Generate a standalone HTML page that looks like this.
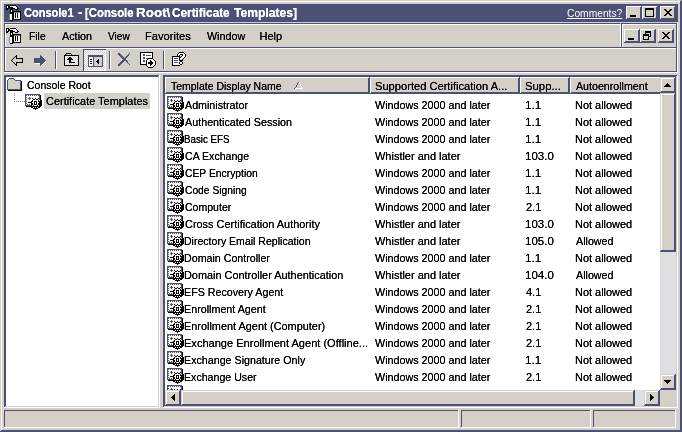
<!DOCTYPE html>
<html><head><meta charset="utf-8"><title>Console1</title>
<style>
*{box-sizing:border-box;margin:0;padding:0}
html,body{width:682px;height:432px;overflow:hidden;background:#d4d0c8;font-family:"Liberation Sans",sans-serif;font-size:11px;color:#000;text-shadow:0 0 0 #000}
.abs{position:absolute}
#win{position:absolute;left:0;top:0;width:682px;height:432px;background:#d4d0c8;will-change:transform;
 box-shadow:inset -1px -1px 0 #4b5076, inset 1px 1px 0 #d4d0c8, inset -2px -2px 0 #4b5076, inset 2px 2px 0 #fff}
#title{left:4px;top:4px;width:674px;height:18px;background:#4b5076}
#title .t{color:#fff;text-shadow:0 0 0 #fff;font-weight:bold;font-size:12px;line-height:14px;white-space:nowrap;letter-spacing:0}
#comments{left:566px;top:7px;color:#fff;text-shadow:0 0 0 #fff;font-size:11px;line-height:12px;text-decoration:underline}
.btn{background:#d4d0c8;box-shadow:inset -1px -1px 0 #4b5076, inset 1px 1px 0 #fff, inset -2px -2px 0 #4b5076}
.menu span{position:absolute;top:30px;font-size:11px;line-height:13px;white-space:nowrap}
.band{border-top:1px solid #4b5076;border-left:1px solid #4b5076;box-shadow:inset 1px 1px 0 #fff}
.row{position:absolute;left:0;height:17px;width:100%}
.row span{position:absolute;top:4px;line-height:13px;white-space:nowrap;font-size:11px}
.hdr{position:absolute;top:0;height:17px;background:#d4d0c8;box-shadow:inset -1px -1px 0 #4b5076, inset 1px 1px 0 #fff, inset -2px -2px 0 #4b5076}
.hdr span{position:absolute;left:6px;top:3px;line-height:13px;white-space:nowrap;font-size:11px}
.pane{background:#fff;box-shadow:inset -1px -1px 0 #fff, inset 1px 1px 0 #4b5076, inset -2px -2px 0 #d4d0c8, inset 2px 2px 0 #4b5076}
.tx{position:absolute;white-space:nowrap;font-size:11px;line-height:13px;transform-origin:0 0;display:block}
.sb{background:#dedfe3}
.sbtn{background:#d4d0c8;box-shadow:inset -1px -1px 0 #4b5076, inset 1px 1px 0 #d4d0c8, inset -2px -2px 0 #4b5076, inset 2px 2px 0 #fff}
.st{box-shadow:inset -1px -1px 0 #fff, inset 1px 1px 0 #4b5076}
.sep{width:2px;height:18px;border-left:1px solid #4b5076;border-right:1px solid #fff}
</style></head><body>
<div id="win">
<div id="title" class="abs"><span class="tx t" style="left:19.7px;top:2px;transform:scaleX(0.9185)">Console1</span><span class="tx t" style="left:74px;top:2px;transform:scaleX(1.075)">-</span><span class="tx t" style="left:80.6px;top:2px;transform:scaleX(0.946)">[Console</span><span class="tx t" style="left:132.1px;top:2px;transform:scaleX(1.1207)">Root\</span><span class="tx t" style="left:168px;top:2px;transform:scaleX(0.9828)">Certificate</span><span class="tx t" style="left:230px;top:2px;transform:scaleX(1.0097)">Templates]</span></div>
<svg class="abs" style="left:6px;top:5px" width="16" height="16" viewBox="0 0 16 16" shape-rendering="crispEdges" ><rect x="0" y="0" width="3" height="1" fill="#000"/><rect x="4" y="0" width="6" height="1" fill="#000"/><rect x="0" y="1" width="1" height="1" fill="#000"/><rect x="1" y="1" width="1" height="1" fill="#fff"/><rect x="2" y="1" width="2" height="1" fill="#000"/><rect x="4" y="1" width="6" height="1" fill="#fff"/><rect x="10" y="1" width="1" height="1" fill="#000"/><rect x="0" y="2" width="1" height="1" fill="#000"/><rect x="1" y="2" width="1" height="1" fill="#fff"/><rect x="2" y="2" width="5" height="1" fill="#000"/><rect x="7" y="2" width="4" height="1" fill="#fff"/><rect x="11" y="2" width="1" height="1" fill="#000"/><rect x="0" y="3" width="3" height="1" fill="#000"/><rect x="4" y="3" width="5" height="1" fill="#000"/><rect x="9" y="3" width="2" height="1" fill="#fff"/><rect x="11" y="3" width="2" height="1" fill="#000"/><rect x="0" y="4" width="2" height="1" fill="#000"/><rect x="4" y="4" width="3" height="1" fill="#000"/><rect x="9" y="4" width="3" height="1" fill="#000"/><rect x="4" y="5" width="1" height="1" fill="#000"/><rect x="5" y="5" width="1" height="1" fill="#fff"/><rect x="6" y="5" width="1" height="1" fill="#000"/><rect x="4" y="6" width="1" height="1" fill="#000"/><rect x="5" y="6" width="1" height="1" fill="#fff"/><rect x="6" y="6" width="9" height="1" fill="#000"/><rect x="4" y="7" width="4" height="1" fill="#000"/><rect x="8" y="7" width="6" height="1" fill="#7d81a0"/><rect x="14" y="7" width="1" height="1" fill="#000"/><rect x="4" y="8" width="4" height="1" fill="#000"/><rect x="8" y="8" width="1" height="1" fill="#fff"/><rect x="9" y="8" width="1" height="1" fill="#000"/><rect x="10" y="8" width="1" height="1" fill="#fff"/><rect x="11" y="8" width="1" height="1" fill="#000"/><rect x="12" y="8" width="2" height="1" fill="#fff"/><rect x="14" y="8" width="1" height="1" fill="#000"/><rect x="3" y="9" width="1" height="1" fill="#7d81a0"/><rect x="4" y="9" width="2" height="1" fill="#fff"/><rect x="6" y="9" width="2" height="1" fill="#000"/><rect x="8" y="9" width="1" height="1" fill="#fff"/><rect x="9" y="9" width="1" height="1" fill="#000"/><rect x="10" y="9" width="1" height="1" fill="#fff"/><rect x="11" y="9" width="1" height="1" fill="#000"/><rect x="12" y="9" width="2" height="1" fill="#fff"/><rect x="14" y="9" width="1" height="1" fill="#000"/><rect x="3" y="10" width="1" height="1" fill="#7d81a0"/><rect x="4" y="10" width="2" height="1" fill="#fff"/><rect x="6" y="10" width="2" height="1" fill="#000"/><rect x="8" y="10" width="1" height="1" fill="#fff"/><rect x="9" y="10" width="1" height="1" fill="#000"/><rect x="10" y="10" width="1" height="1" fill="#fff"/><rect x="11" y="10" width="1" height="1" fill="#000"/><rect x="12" y="10" width="2" height="1" fill="#fff"/><rect x="14" y="10" width="1" height="1" fill="#000"/><rect x="3" y="11" width="1" height="1" fill="#7d81a0"/><rect x="4" y="11" width="2" height="1" fill="#fff"/><rect x="6" y="11" width="2" height="1" fill="#000"/><rect x="8" y="11" width="1" height="1" fill="#fff"/><rect x="9" y="11" width="1" height="1" fill="#000"/><rect x="10" y="11" width="1" height="1" fill="#fff"/><rect x="11" y="11" width="1" height="1" fill="#000"/><rect x="12" y="11" width="2" height="1" fill="#fff"/><rect x="14" y="11" width="1" height="1" fill="#000"/><rect x="3" y="12" width="1" height="1" fill="#7d81a0"/><rect x="4" y="12" width="2" height="1" fill="#fff"/><rect x="6" y="12" width="2" height="1" fill="#000"/><rect x="8" y="12" width="1" height="1" fill="#fff"/><rect x="9" y="12" width="1" height="1" fill="#000"/><rect x="10" y="12" width="1" height="1" fill="#fff"/><rect x="11" y="12" width="1" height="1" fill="#000"/><rect x="12" y="12" width="2" height="1" fill="#fff"/><rect x="14" y="12" width="1" height="1" fill="#000"/><rect x="3" y="13" width="1" height="1" fill="#7d81a0"/><rect x="4" y="13" width="2" height="1" fill="#fff"/><rect x="6" y="13" width="2" height="1" fill="#000"/><rect x="8" y="13" width="6" height="1" fill="#fff"/><rect x="14" y="13" width="1" height="1" fill="#000"/><rect x="3" y="14" width="1" height="1" fill="#7d81a0"/><rect x="4" y="14" width="2" height="1" fill="#fff"/><rect x="6" y="14" width="9" height="1" fill="#000"/><rect x="4" y="15" width="3" height="1" fill="#000"/></svg>
<span class="tx" style="left:567px;top:7px;transform:scaleX(0.9322);color:#fff;text-shadow:none;text-decoration:underline">Comments?</span>
<div class="abs btn" style="left:626px;top:6px;width:16px;height:14px"><div class="abs" style="left:4px;top:9px;width:6px;height:2px;background:#000"></div></div>
<div class="abs btn" style="left:642px;top:6px;width:16px;height:14px"><div class="abs" style="left:3px;top:2px;width:9px;height:9px;border:1px solid #000;border-top-width:2px"></div></div>
<div class="abs btn" style="left:660px;top:6px;width:16px;height:14px"><svg class="abs" style="left:4px;top:3px" width="8" height="7" viewBox="0 0 8 7" shape-rendering="crispEdges"><path d="M0 0h2v1h1v1h2v-1h1v-1h2v1h-1v1h-1v1h-1v1h1v1h1v1h1v1h-2v-1h-1v-1h-2v1h-1v1h-2v-1h1v-1h1v-1h1v-1h-1v-1h-1v-1h-1z" fill="#000"/></svg></div>
<div class="abs band" style="left:4px;top:23px;width:617px;height:25px;border-right:1px solid #fff"></div>
<div class="abs band" style="left:621px;top:23px;width:56px;height:25px;border-right:1px solid #4b5076"></div>
<div class="abs" style="left:677px;top:23px;width:1px;height:50px;background:#fff"></div>
<svg class="abs" style="left:6px;top:28px" width="16" height="16" viewBox="0 0 16 16" shape-rendering="crispEdges" ><rect x="0" y="0" width="3" height="1" fill="#000"/><rect x="4" y="0" width="6" height="1" fill="#000"/><rect x="0" y="1" width="1" height="1" fill="#000"/><rect x="1" y="1" width="1" height="1" fill="#fff"/><rect x="2" y="1" width="2" height="1" fill="#000"/><rect x="4" y="1" width="6" height="1" fill="#fff"/><rect x="10" y="1" width="1" height="1" fill="#000"/><rect x="0" y="2" width="1" height="1" fill="#000"/><rect x="1" y="2" width="1" height="1" fill="#fff"/><rect x="2" y="2" width="5" height="1" fill="#000"/><rect x="7" y="2" width="4" height="1" fill="#fff"/><rect x="11" y="2" width="1" height="1" fill="#000"/><rect x="0" y="3" width="3" height="1" fill="#000"/><rect x="4" y="3" width="5" height="1" fill="#000"/><rect x="9" y="3" width="2" height="1" fill="#fff"/><rect x="11" y="3" width="2" height="1" fill="#000"/><rect x="0" y="4" width="2" height="1" fill="#000"/><rect x="4" y="4" width="3" height="1" fill="#000"/><rect x="9" y="4" width="3" height="1" fill="#000"/><rect x="4" y="5" width="1" height="1" fill="#000"/><rect x="5" y="5" width="1" height="1" fill="#fff"/><rect x="6" y="5" width="1" height="1" fill="#000"/><rect x="4" y="6" width="1" height="1" fill="#000"/><rect x="5" y="6" width="1" height="1" fill="#fff"/><rect x="6" y="6" width="9" height="1" fill="#000"/><rect x="4" y="7" width="4" height="1" fill="#000"/><rect x="8" y="7" width="6" height="1" fill="#7d81a0"/><rect x="14" y="7" width="1" height="1" fill="#000"/><rect x="4" y="8" width="4" height="1" fill="#000"/><rect x="8" y="8" width="1" height="1" fill="#fff"/><rect x="9" y="8" width="1" height="1" fill="#000"/><rect x="10" y="8" width="1" height="1" fill="#fff"/><rect x="11" y="8" width="1" height="1" fill="#000"/><rect x="12" y="8" width="2" height="1" fill="#fff"/><rect x="14" y="8" width="1" height="1" fill="#000"/><rect x="3" y="9" width="1" height="1" fill="#7d81a0"/><rect x="4" y="9" width="2" height="1" fill="#fff"/><rect x="6" y="9" width="2" height="1" fill="#000"/><rect x="8" y="9" width="1" height="1" fill="#fff"/><rect x="9" y="9" width="1" height="1" fill="#000"/><rect x="10" y="9" width="1" height="1" fill="#fff"/><rect x="11" y="9" width="1" height="1" fill="#000"/><rect x="12" y="9" width="2" height="1" fill="#fff"/><rect x="14" y="9" width="1" height="1" fill="#000"/><rect x="3" y="10" width="1" height="1" fill="#7d81a0"/><rect x="4" y="10" width="2" height="1" fill="#fff"/><rect x="6" y="10" width="2" height="1" fill="#000"/><rect x="8" y="10" width="1" height="1" fill="#fff"/><rect x="9" y="10" width="1" height="1" fill="#000"/><rect x="10" y="10" width="1" height="1" fill="#fff"/><rect x="11" y="10" width="1" height="1" fill="#000"/><rect x="12" y="10" width="2" height="1" fill="#fff"/><rect x="14" y="10" width="1" height="1" fill="#000"/><rect x="3" y="11" width="1" height="1" fill="#7d81a0"/><rect x="4" y="11" width="2" height="1" fill="#fff"/><rect x="6" y="11" width="2" height="1" fill="#000"/><rect x="8" y="11" width="1" height="1" fill="#fff"/><rect x="9" y="11" width="1" height="1" fill="#000"/><rect x="10" y="11" width="1" height="1" fill="#fff"/><rect x="11" y="11" width="1" height="1" fill="#000"/><rect x="12" y="11" width="2" height="1" fill="#fff"/><rect x="14" y="11" width="1" height="1" fill="#000"/><rect x="3" y="12" width="1" height="1" fill="#7d81a0"/><rect x="4" y="12" width="2" height="1" fill="#fff"/><rect x="6" y="12" width="2" height="1" fill="#000"/><rect x="8" y="12" width="1" height="1" fill="#fff"/><rect x="9" y="12" width="1" height="1" fill="#000"/><rect x="10" y="12" width="1" height="1" fill="#fff"/><rect x="11" y="12" width="1" height="1" fill="#000"/><rect x="12" y="12" width="2" height="1" fill="#fff"/><rect x="14" y="12" width="1" height="1" fill="#000"/><rect x="3" y="13" width="1" height="1" fill="#7d81a0"/><rect x="4" y="13" width="2" height="1" fill="#fff"/><rect x="6" y="13" width="2" height="1" fill="#000"/><rect x="8" y="13" width="6" height="1" fill="#fff"/><rect x="14" y="13" width="1" height="1" fill="#000"/><rect x="3" y="14" width="1" height="1" fill="#7d81a0"/><rect x="4" y="14" width="2" height="1" fill="#fff"/><rect x="6" y="14" width="9" height="1" fill="#000"/><rect x="4" y="15" width="3" height="1" fill="#000"/></svg>
<span class="tx" style="left:29px;top:30px;transform:scaleX(0.9375);">File</span><span class="tx" style="left:62px;top:30px;transform:scaleX(0.9833);">Action</span><span class="tx" style="left:107.5px;top:30px;transform:scaleX(0.9167);">View</span><span class="tx" style="left:144.5px;top:30px;transform:scaleX(1.0114);">Favorites</span><span class="tx" style="left:206.5px;top:30px;transform:scaleX(0.9744);">Window</span><span class="tx" style="left:259.5px;top:30px;transform:scaleX(1.0);">Help</span>
<div class="abs btn" style="left:624px;top:29px;width:16px;height:14px"><div class="abs" style="left:4px;top:9px;width:6px;height:2px;background:#000"></div></div>
<div class="abs btn" style="left:640px;top:29px;width:16px;height:14px"><div class="abs" style="left:5px;top:2px;width:6px;height:6px;border:1px solid #000;border-top-width:2px"></div><div class="abs" style="left:3px;top:5px;width:6px;height:6px;border:1px solid #000;border-top-width:2px;background:#d4d0c8"></div></div>
<div class="abs btn" style="left:658px;top:29px;width:16px;height:14px"><svg class="abs" style="left:4px;top:3px" width="8" height="7" viewBox="0 0 8 7" shape-rendering="crispEdges"><path d="M0 0h2v1h1v1h2v-1h1v-1h2v1h-1v1h-1v1h-1v1h1v1h1v1h1v1h-2v-1h-1v-1h-2v1h-1v1h-2v-1h1v-1h1v-1h1v-1h-1v-1h-1v-1h-1z" fill="#000"/></svg></div>
<div class="abs band" style="left:4px;top:47px;width:673px;height:25px;border-right:1px solid #4b5076"></div>
<div class="abs" style="left:4px;top:71px;width:673px;height:1px;background:#4b5076"></div>
<div class="abs" style="left:4px;top:72px;width:674px;height:1px;background:#fff"></div>
<svg class="abs" style="left:10px;top:55px" width="13" height="11" viewBox="0 0 13 11" shape-rendering="crispEdges" ><rect x="6" y="0" width="1" height="1" fill="#000"/><rect x="5" y="1" width="2" height="1" fill="#000"/><rect x="4" y="2" width="1" height="1" fill="#000"/><rect x="5" y="2" width="1" height="1" fill="#d4d0c8"/><rect x="6" y="2" width="1" height="1" fill="#000"/><rect x="3" y="3" width="1" height="1" fill="#000"/><rect x="4" y="3" width="2" height="1" fill="#d4d0c8"/><rect x="6" y="3" width="7" height="1" fill="#000"/><rect x="2" y="4" width="1" height="1" fill="#000"/><rect x="3" y="4" width="9" height="1" fill="#d4d0c8"/><rect x="12" y="4" width="1" height="1" fill="#000"/><rect x="1" y="5" width="1" height="1" fill="#000"/><rect x="2" y="5" width="10" height="1" fill="#d4d0c8"/><rect x="12" y="5" width="1" height="1" fill="#000"/><rect x="2" y="6" width="1" height="1" fill="#000"/><rect x="3" y="6" width="9" height="1" fill="#d4d0c8"/><rect x="12" y="6" width="1" height="1" fill="#000"/><rect x="3" y="7" width="1" height="1" fill="#000"/><rect x="4" y="7" width="2" height="1" fill="#d4d0c8"/><rect x="6" y="7" width="7" height="1" fill="#000"/><rect x="4" y="8" width="1" height="1" fill="#000"/><rect x="5" y="8" width="1" height="1" fill="#d4d0c8"/><rect x="6" y="8" width="1" height="1" fill="#000"/><rect x="5" y="9" width="2" height="1" fill="#000"/><rect x="6" y="10" width="1" height="1" fill="#000"/></svg><svg class="abs" style="left:34px;top:55px" width="14" height="11" viewBox="0 0 14 11" shape-rendering="crispEdges" ><rect x="6" y="0" width="1" height="1" fill="#4b5076"/><rect x="6" y="1" width="2" height="1" fill="#4b5076"/><rect x="6" y="2" width="3" height="1" fill="#4b5076"/><rect x="0" y="3" width="10" height="1" fill="#4b5076"/><rect x="0" y="4" width="11" height="1" fill="#4b5076"/><rect x="0" y="5" width="12" height="1" fill="#4b5076"/><rect x="0" y="6" width="11" height="1" fill="#4b5076"/><rect x="11" y="6" width="1" height="1" fill="#fff"/><rect x="0" y="7" width="10" height="1" fill="#4b5076"/><rect x="10" y="7" width="1" height="1" fill="#fff"/><rect x="1" y="8" width="5" height="1" fill="#fff"/><rect x="6" y="8" width="3" height="1" fill="#4b5076"/><rect x="9" y="8" width="1" height="1" fill="#fff"/><rect x="6" y="9" width="2" height="1" fill="#4b5076"/><rect x="8" y="9" width="1" height="1" fill="#fff"/><rect x="6" y="10" width="1" height="1" fill="#4b5076"/><rect x="7" y="10" width="1" height="1" fill="#fff"/></svg><div class="abs sep" style="left:55px;top:51px"></div><svg class="abs" style="left:64px;top:53px" width="15" height="13" viewBox="0 0 15 13" shape-rendering="crispEdges" ><rect x="2" y="0" width="5" height="1" fill="#000"/><rect x="1" y="1" width="1" height="1" fill="#000"/><rect x="2" y="1" width="5" height="1" fill="#d4d0c8"/><rect x="7" y="1" width="1" height="1" fill="#000"/><rect x="0" y="2" width="15" height="1" fill="#000"/><rect x="0" y="3" width="1" height="1" fill="#000"/><rect x="1" y="3" width="1" height="1" fill="#fff"/><rect x="2" y="3" width="1" height="1" fill="#d4d0c8"/><rect x="3" y="3" width="1" height="1" fill="#fff"/><rect x="4" y="3" width="1" height="1" fill="#d4d0c8"/><rect x="5" y="3" width="1" height="1" fill="#fff"/><rect x="6" y="3" width="1" height="1" fill="#d4d0c8"/><rect x="7" y="3" width="1" height="1" fill="#fff"/><rect x="8" y="3" width="1" height="1" fill="#d4d0c8"/><rect x="9" y="3" width="1" height="1" fill="#fff"/><rect x="10" y="3" width="1" height="1" fill="#d4d0c8"/><rect x="11" y="3" width="1" height="1" fill="#fff"/><rect x="12" y="3" width="1" height="1" fill="#d4d0c8"/><rect x="13" y="3" width="1" height="1" fill="#fff"/><rect x="14" y="3" width="1" height="1" fill="#000"/><rect x="0" y="4" width="1" height="1" fill="#000"/><rect x="1" y="4" width="1" height="1" fill="#d4d0c8"/><rect x="2" y="4" width="1" height="1" fill="#fff"/><rect x="3" y="4" width="1" height="1" fill="#d4d0c8"/><rect x="4" y="4" width="1" height="1" fill="#fff"/><rect x="5" y="4" width="2" height="1" fill="#000"/><rect x="7" y="4" width="1" height="1" fill="#d4d0c8"/><rect x="8" y="4" width="1" height="1" fill="#fff"/><rect x="9" y="4" width="1" height="1" fill="#d4d0c8"/><rect x="10" y="4" width="1" height="1" fill="#fff"/><rect x="11" y="4" width="1" height="1" fill="#d4d0c8"/><rect x="12" y="4" width="1" height="1" fill="#fff"/><rect x="13" y="4" width="1" height="1" fill="#d4d0c8"/><rect x="14" y="4" width="1" height="1" fill="#000"/><rect x="0" y="5" width="1" height="1" fill="#000"/><rect x="1" y="5" width="1" height="1" fill="#fff"/><rect x="2" y="5" width="1" height="1" fill="#d4d0c8"/><rect x="3" y="5" width="1" height="1" fill="#fff"/><rect x="4" y="5" width="4" height="1" fill="#000"/><rect x="8" y="5" width="1" height="1" fill="#d4d0c8"/><rect x="9" y="5" width="1" height="1" fill="#fff"/><rect x="10" y="5" width="1" height="1" fill="#d4d0c8"/><rect x="11" y="5" width="1" height="1" fill="#fff"/><rect x="12" y="5" width="1" height="1" fill="#d4d0c8"/><rect x="13" y="5" width="1" height="1" fill="#fff"/><rect x="14" y="5" width="1" height="1" fill="#000"/><rect x="0" y="6" width="1" height="1" fill="#000"/><rect x="1" y="6" width="1" height="1" fill="#d4d0c8"/><rect x="2" y="6" width="1" height="1" fill="#fff"/><rect x="3" y="6" width="6" height="1" fill="#000"/><rect x="9" y="6" width="1" height="1" fill="#d4d0c8"/><rect x="10" y="6" width="1" height="1" fill="#fff"/><rect x="11" y="6" width="1" height="1" fill="#d4d0c8"/><rect x="12" y="6" width="1" height="1" fill="#fff"/><rect x="13" y="6" width="1" height="1" fill="#d4d0c8"/><rect x="14" y="6" width="1" height="1" fill="#000"/><rect x="0" y="7" width="1" height="1" fill="#000"/><rect x="1" y="7" width="1" height="1" fill="#fff"/><rect x="2" y="7" width="1" height="1" fill="#d4d0c8"/><rect x="3" y="7" width="1" height="1" fill="#fff"/><rect x="4" y="7" width="1" height="1" fill="#d4d0c8"/><rect x="5" y="7" width="2" height="1" fill="#000"/><rect x="7" y="7" width="1" height="1" fill="#fff"/><rect x="8" y="7" width="1" height="1" fill="#d4d0c8"/><rect x="9" y="7" width="1" height="1" fill="#fff"/><rect x="10" y="7" width="1" height="1" fill="#d4d0c8"/><rect x="11" y="7" width="1" height="1" fill="#fff"/><rect x="12" y="7" width="1" height="1" fill="#d4d0c8"/><rect x="13" y="7" width="1" height="1" fill="#fff"/><rect x="14" y="7" width="1" height="1" fill="#000"/><rect x="0" y="8" width="1" height="1" fill="#000"/><rect x="1" y="8" width="1" height="1" fill="#d4d0c8"/><rect x="2" y="8" width="1" height="1" fill="#fff"/><rect x="3" y="8" width="1" height="1" fill="#d4d0c8"/><rect x="4" y="8" width="1" height="1" fill="#fff"/><rect x="5" y="8" width="2" height="1" fill="#000"/><rect x="7" y="8" width="1" height="1" fill="#d4d0c8"/><rect x="8" y="8" width="1" height="1" fill="#fff"/><rect x="9" y="8" width="1" height="1" fill="#d4d0c8"/><rect x="10" y="8" width="1" height="1" fill="#fff"/><rect x="11" y="8" width="1" height="1" fill="#d4d0c8"/><rect x="12" y="8" width="1" height="1" fill="#fff"/><rect x="13" y="8" width="1" height="1" fill="#d4d0c8"/><rect x="14" y="8" width="1" height="1" fill="#000"/><rect x="0" y="9" width="1" height="1" fill="#000"/><rect x="1" y="9" width="1" height="1" fill="#fff"/><rect x="2" y="9" width="1" height="1" fill="#d4d0c8"/><rect x="3" y="9" width="1" height="1" fill="#fff"/><rect x="4" y="9" width="1" height="1" fill="#d4d0c8"/><rect x="5" y="9" width="6" height="1" fill="#000"/><rect x="11" y="9" width="1" height="1" fill="#fff"/><rect x="12" y="9" width="1" height="1" fill="#d4d0c8"/><rect x="13" y="9" width="1" height="1" fill="#fff"/><rect x="14" y="9" width="1" height="1" fill="#000"/><rect x="0" y="10" width="1" height="1" fill="#000"/><rect x="1" y="10" width="1" height="1" fill="#d4d0c8"/><rect x="2" y="10" width="1" height="1" fill="#fff"/><rect x="3" y="10" width="1" height="1" fill="#d4d0c8"/><rect x="4" y="10" width="1" height="1" fill="#fff"/><rect x="5" y="10" width="1" height="1" fill="#d4d0c8"/><rect x="6" y="10" width="1" height="1" fill="#fff"/><rect x="7" y="10" width="1" height="1" fill="#d4d0c8"/><rect x="8" y="10" width="1" height="1" fill="#fff"/><rect x="9" y="10" width="1" height="1" fill="#d4d0c8"/><rect x="10" y="10" width="1" height="1" fill="#fff"/><rect x="11" y="10" width="1" height="1" fill="#d4d0c8"/><rect x="12" y="10" width="1" height="1" fill="#fff"/><rect x="13" y="10" width="1" height="1" fill="#d4d0c8"/><rect x="14" y="10" width="1" height="1" fill="#000"/><rect x="0" y="11" width="1" height="1" fill="#000"/><rect x="1" y="11" width="1" height="1" fill="#fff"/><rect x="2" y="11" width="1" height="1" fill="#d4d0c8"/><rect x="3" y="11" width="1" height="1" fill="#fff"/><rect x="4" y="11" width="1" height="1" fill="#d4d0c8"/><rect x="5" y="11" width="1" height="1" fill="#fff"/><rect x="6" y="11" width="1" height="1" fill="#d4d0c8"/><rect x="7" y="11" width="1" height="1" fill="#fff"/><rect x="8" y="11" width="1" height="1" fill="#d4d0c8"/><rect x="9" y="11" width="1" height="1" fill="#fff"/><rect x="10" y="11" width="1" height="1" fill="#d4d0c8"/><rect x="11" y="11" width="1" height="1" fill="#fff"/><rect x="12" y="11" width="1" height="1" fill="#d4d0c8"/><rect x="13" y="11" width="1" height="1" fill="#fff"/><rect x="14" y="11" width="1" height="1" fill="#000"/><rect x="0" y="12" width="15" height="1" fill="#000"/></svg><div class="abs" style="left:83px;top:49px;width:23px;height:22px;background:repeating-conic-gradient(#fff 0 25%,#d4d0c8 0 50%) 0 0/2px 2px;box-shadow:inset 1px 1px 0 #4b5076, inset -1px -1px 0 #fff"></div><svg class="abs" style="left:88px;top:55px" width="15" height="12" viewBox="0 0 15 12" shape-rendering="crispEdges" ><rect x="0" y="0" width="15" height="1" fill="#4b5076"/><rect x="0" y="1" width="15" height="1" fill="#4b5076"/><rect x="0" y="2" width="1" height="1" fill="#4b5076"/><rect x="1" y="2" width="4" height="1" fill="#fff"/><rect x="5" y="2" width="1" height="1" fill="#4b5076"/><rect x="6" y="2" width="8" height="1" fill="#d4d0c8"/><rect x="14" y="2" width="1" height="1" fill="#4b5076"/><rect x="0" y="3" width="1" height="1" fill="#4b5076"/><rect x="1" y="3" width="4" height="1" fill="#fff"/><rect x="5" y="3" width="1" height="1" fill="#4b5076"/><rect x="6" y="3" width="8" height="1" fill="#d4d0c8"/><rect x="14" y="3" width="1" height="1" fill="#4b5076"/><rect x="0" y="4" width="1" height="1" fill="#4b5076"/><rect x="1" y="4" width="1" height="1" fill="#fff"/><rect x="2" y="4" width="2" height="1" fill="#000"/><rect x="4" y="4" width="1" height="1" fill="#fff"/><rect x="5" y="4" width="1" height="1" fill="#4b5076"/><rect x="6" y="4" width="4" height="1" fill="#d4d0c8"/><rect x="10" y="4" width="1" height="1" fill="#000"/><rect x="11" y="4" width="3" height="1" fill="#d4d0c8"/><rect x="14" y="4" width="1" height="1" fill="#4b5076"/><rect x="0" y="5" width="1" height="1" fill="#4b5076"/><rect x="1" y="5" width="4" height="1" fill="#fff"/><rect x="5" y="5" width="1" height="1" fill="#4b5076"/><rect x="6" y="5" width="3" height="1" fill="#d4d0c8"/><rect x="9" y="5" width="2" height="1" fill="#000"/><rect x="11" y="5" width="3" height="1" fill="#d4d0c8"/><rect x="14" y="5" width="1" height="1" fill="#4b5076"/><rect x="0" y="6" width="1" height="1" fill="#4b5076"/><rect x="1" y="6" width="1" height="1" fill="#fff"/><rect x="2" y="6" width="2" height="1" fill="#000"/><rect x="4" y="6" width="1" height="1" fill="#fff"/><rect x="5" y="6" width="1" height="1" fill="#4b5076"/><rect x="6" y="6" width="2" height="1" fill="#d4d0c8"/><rect x="8" y="6" width="3" height="1" fill="#000"/><rect x="11" y="6" width="3" height="1" fill="#d4d0c8"/><rect x="14" y="6" width="1" height="1" fill="#4b5076"/><rect x="0" y="7" width="1" height="1" fill="#4b5076"/><rect x="1" y="7" width="4" height="1" fill="#fff"/><rect x="5" y="7" width="1" height="1" fill="#4b5076"/><rect x="6" y="7" width="3" height="1" fill="#d4d0c8"/><rect x="9" y="7" width="2" height="1" fill="#000"/><rect x="11" y="7" width="3" height="1" fill="#d4d0c8"/><rect x="14" y="7" width="1" height="1" fill="#4b5076"/><rect x="0" y="8" width="1" height="1" fill="#4b5076"/><rect x="1" y="8" width="1" height="1" fill="#fff"/><rect x="2" y="8" width="2" height="1" fill="#000"/><rect x="4" y="8" width="1" height="1" fill="#fff"/><rect x="5" y="8" width="1" height="1" fill="#4b5076"/><rect x="6" y="8" width="4" height="1" fill="#d4d0c8"/><rect x="10" y="8" width="1" height="1" fill="#000"/><rect x="11" y="8" width="3" height="1" fill="#d4d0c8"/><rect x="14" y="8" width="1" height="1" fill="#4b5076"/><rect x="0" y="9" width="1" height="1" fill="#4b5076"/><rect x="1" y="9" width="4" height="1" fill="#fff"/><rect x="5" y="9" width="1" height="1" fill="#4b5076"/><rect x="6" y="9" width="8" height="1" fill="#d4d0c8"/><rect x="14" y="9" width="1" height="1" fill="#4b5076"/><rect x="0" y="10" width="1" height="1" fill="#4b5076"/><rect x="1" y="10" width="4" height="1" fill="#fff"/><rect x="5" y="10" width="1" height="1" fill="#4b5076"/><rect x="6" y="10" width="8" height="1" fill="#d4d0c8"/><rect x="14" y="10" width="1" height="1" fill="#4b5076"/><rect x="0" y="11" width="15" height="1" fill="#4b5076"/></svg><div class="abs sep" style="left:109px;top:51px"></div><svg class="abs" style="left:118px;top:53px" width="13" height="13" viewBox="0 0 13 13" shape-rendering="crispEdges" ><rect x="0" y="0" width="2" height="1" fill="#4b5076"/><rect x="11" y="0" width="1" height="1" fill="#4b5076"/><rect x="0" y="1" width="3" height="1" fill="#4b5076"/><rect x="10" y="1" width="1" height="1" fill="#4b5076"/><rect x="1" y="2" width="3" height="1" fill="#4b5076"/><rect x="9" y="2" width="2" height="1" fill="#4b5076"/><rect x="2" y="3" width="3" height="1" fill="#4b5076"/><rect x="8" y="3" width="2" height="1" fill="#4b5076"/><rect x="3" y="4" width="3" height="1" fill="#4b5076"/><rect x="7" y="4" width="2" height="1" fill="#4b5076"/><rect x="4" y="5" width="4" height="1" fill="#4b5076"/><rect x="5" y="6" width="3" height="1" fill="#4b5076"/><rect x="4" y="7" width="5" height="1" fill="#4b5076"/><rect x="3" y="8" width="3" height="1" fill="#4b5076"/><rect x="8" y="8" width="2" height="1" fill="#4b5076"/><rect x="2" y="9" width="3" height="1" fill="#4b5076"/><rect x="9" y="9" width="1" height="1" fill="#4b5076"/><rect x="1" y="10" width="3" height="1" fill="#4b5076"/><rect x="10" y="10" width="1" height="1" fill="#4b5076"/><rect x="0" y="11" width="3" height="1" fill="#4b5076"/><rect x="11" y="11" width="1" height="1" fill="#4b5076"/><rect x="0" y="12" width="2" height="1" fill="#4b5076"/></svg><svg class="abs" style="left:140px;top:52px" width="17" height="16" viewBox="0 0 17 16" shape-rendering="crispEdges" ><rect x="0" y="0" width="13" height="1" fill="#000"/><rect x="0" y="1" width="1" height="1" fill="#000"/><rect x="1" y="1" width="11" height="1" fill="#fff"/><rect x="12" y="1" width="1" height="1" fill="#000"/><rect x="0" y="2" width="1" height="1" fill="#000"/><rect x="1" y="2" width="2" height="1" fill="#fff"/><rect x="3" y="2" width="2" height="1" fill="#4b5076"/><rect x="5" y="2" width="7" height="1" fill="#fff"/><rect x="12" y="2" width="1" height="1" fill="#000"/><rect x="0" y="3" width="1" height="1" fill="#000"/><rect x="1" y="3" width="2" height="1" fill="#fff"/><rect x="3" y="3" width="2" height="1" fill="#4b5076"/><rect x="5" y="3" width="1" height="1" fill="#fff"/><rect x="6" y="3" width="5" height="1" fill="#4b5076"/><rect x="11" y="3" width="1" height="1" fill="#fff"/><rect x="12" y="3" width="1" height="1" fill="#000"/><rect x="0" y="4" width="1" height="1" fill="#000"/><rect x="1" y="4" width="11" height="1" fill="#fff"/><rect x="12" y="4" width="1" height="1" fill="#000"/><rect x="0" y="5" width="1" height="1" fill="#000"/><rect x="1" y="5" width="2" height="1" fill="#fff"/><rect x="3" y="5" width="2" height="1" fill="#4b5076"/><rect x="5" y="5" width="7" height="1" fill="#fff"/><rect x="12" y="5" width="1" height="1" fill="#000"/><rect x="0" y="6" width="1" height="1" fill="#000"/><rect x="1" y="6" width="2" height="1" fill="#fff"/><rect x="3" y="6" width="2" height="1" fill="#4b5076"/><rect x="5" y="6" width="1" height="1" fill="#fff"/><rect x="6" y="6" width="2" height="1" fill="#4b5076"/><rect x="8" y="6" width="5" height="1" fill="#000"/><rect x="0" y="7" width="1" height="1" fill="#000"/><rect x="1" y="7" width="6" height="1" fill="#fff"/><rect x="7" y="7" width="1" height="1" fill="#000"/><rect x="8" y="7" width="5" height="1" fill="#fff"/><rect x="13" y="7" width="1" height="1" fill="#000"/><rect x="0" y="8" width="1" height="1" fill="#000"/><rect x="1" y="8" width="2" height="1" fill="#fff"/><rect x="3" y="8" width="2" height="1" fill="#4b5076"/><rect x="5" y="8" width="1" height="1" fill="#fff"/><rect x="6" y="8" width="1" height="1" fill="#000"/><rect x="7" y="8" width="3" height="1" fill="#fff"/><rect x="10" y="8" width="1" height="1" fill="#000"/><rect x="11" y="8" width="3" height="1" fill="#fff"/><rect x="14" y="8" width="1" height="1" fill="#000"/><rect x="0" y="9" width="1" height="1" fill="#000"/><rect x="1" y="9" width="2" height="1" fill="#fff"/><rect x="3" y="9" width="2" height="1" fill="#4b5076"/><rect x="5" y="9" width="1" height="1" fill="#fff"/><rect x="6" y="9" width="1" height="1" fill="#000"/><rect x="7" y="9" width="3" height="1" fill="#fff"/><rect x="10" y="9" width="2" height="1" fill="#000"/><rect x="12" y="9" width="3" height="1" fill="#fff"/><rect x="15" y="9" width="1" height="1" fill="#000"/><rect x="0" y="10" width="1" height="1" fill="#000"/><rect x="1" y="10" width="5" height="1" fill="#fff"/><rect x="6" y="10" width="1" height="1" fill="#000"/><rect x="7" y="10" width="1" height="1" fill="#fff"/><rect x="8" y="10" width="5" height="1" fill="#000"/><rect x="13" y="10" width="2" height="1" fill="#fff"/><rect x="15" y="10" width="1" height="1" fill="#000"/><rect x="0" y="11" width="1" height="1" fill="#000"/><rect x="1" y="11" width="5" height="1" fill="#fff"/><rect x="6" y="11" width="1" height="1" fill="#000"/><rect x="7" y="11" width="1" height="1" fill="#fff"/><rect x="8" y="11" width="5" height="1" fill="#000"/><rect x="13" y="11" width="2" height="1" fill="#fff"/><rect x="15" y="11" width="1" height="1" fill="#000"/><rect x="0" y="12" width="7" height="1" fill="#000"/><rect x="7" y="12" width="3" height="1" fill="#fff"/><rect x="10" y="12" width="2" height="1" fill="#000"/><rect x="12" y="12" width="3" height="1" fill="#fff"/><rect x="15" y="12" width="1" height="1" fill="#000"/><rect x="6" y="13" width="1" height="1" fill="#000"/><rect x="7" y="13" width="3" height="1" fill="#fff"/><rect x="10" y="13" width="1" height="1" fill="#000"/><rect x="11" y="13" width="3" height="1" fill="#fff"/><rect x="14" y="13" width="1" height="1" fill="#000"/><rect x="7" y="14" width="1" height="1" fill="#000"/><rect x="8" y="14" width="5" height="1" fill="#fff"/><rect x="13" y="14" width="1" height="1" fill="#000"/><rect x="8" y="15" width="5" height="1" fill="#000"/></svg><div class="abs sep" style="left:163px;top:51px"></div><svg class="abs" style="left:172px;top:52px" width="14" height="14" viewBox="0 0 14 14" shape-rendering="crispEdges" ><rect x="7" y="0" width="5" height="1" fill="#000"/><rect x="6" y="1" width="1" height="1" fill="#000"/><rect x="7" y="1" width="5" height="1" fill="#fff"/><rect x="12" y="1" width="1" height="1" fill="#000"/><rect x="5" y="2" width="1" height="1" fill="#000"/><rect x="6" y="2" width="2" height="1" fill="#fff"/><rect x="8" y="2" width="3" height="1" fill="#000"/><rect x="11" y="2" width="2" height="1" fill="#fff"/><rect x="13" y="2" width="1" height="1" fill="#000"/><rect x="5" y="3" width="1" height="1" fill="#000"/><rect x="6" y="3" width="1" height="1" fill="#fff"/><rect x="7" y="3" width="1" height="1" fill="#000"/><rect x="10" y="3" width="1" height="1" fill="#000"/><rect x="11" y="3" width="2" height="1" fill="#fff"/><rect x="13" y="3" width="1" height="1" fill="#000"/><rect x="0" y="4" width="8" height="1" fill="#000"/><rect x="9" y="4" width="1" height="1" fill="#000"/><rect x="10" y="4" width="3" height="1" fill="#fff"/><rect x="13" y="4" width="1" height="1" fill="#000"/><rect x="0" y="5" width="1" height="1" fill="#000"/><rect x="1" y="5" width="6" height="1" fill="#fff"/><rect x="7" y="5" width="2" height="1" fill="#000"/><rect x="9" y="5" width="3" height="1" fill="#fff"/><rect x="12" y="5" width="1" height="1" fill="#000"/><rect x="0" y="6" width="1" height="1" fill="#000"/><rect x="1" y="6" width="1" height="1" fill="#fff"/><rect x="2" y="6" width="4" height="1" fill="#4b5076"/><rect x="6" y="6" width="1" height="1" fill="#fff"/><rect x="7" y="6" width="1" height="1" fill="#000"/><rect x="8" y="6" width="3" height="1" fill="#fff"/><rect x="11" y="6" width="1" height="1" fill="#000"/><rect x="0" y="7" width="1" height="1" fill="#000"/><rect x="1" y="7" width="6" height="1" fill="#fff"/><rect x="7" y="7" width="1" height="1" fill="#000"/><rect x="8" y="7" width="2" height="1" fill="#fff"/><rect x="10" y="7" width="1" height="1" fill="#000"/><rect x="0" y="8" width="1" height="1" fill="#000"/><rect x="1" y="8" width="1" height="1" fill="#fff"/><rect x="2" y="8" width="4" height="1" fill="#4b5076"/><rect x="6" y="8" width="1" height="1" fill="#fff"/><rect x="7" y="8" width="4" height="1" fill="#000"/><rect x="0" y="9" width="1" height="1" fill="#000"/><rect x="1" y="9" width="7" height="1" fill="#fff"/><rect x="8" y="9" width="2" height="1" fill="#000"/><rect x="0" y="10" width="1" height="1" fill="#000"/><rect x="1" y="10" width="1" height="1" fill="#fff"/><rect x="2" y="10" width="4" height="1" fill="#4b5076"/><rect x="6" y="10" width="1" height="1" fill="#fff"/><rect x="7" y="10" width="1" height="1" fill="#000"/><rect x="8" y="10" width="2" height="1" fill="#fff"/><rect x="10" y="10" width="1" height="1" fill="#000"/><rect x="0" y="11" width="1" height="1" fill="#000"/><rect x="1" y="11" width="6" height="1" fill="#fff"/><rect x="7" y="11" width="1" height="1" fill="#000"/><rect x="8" y="11" width="2" height="1" fill="#fff"/><rect x="10" y="11" width="1" height="1" fill="#000"/><rect x="0" y="12" width="1" height="1" fill="#000"/><rect x="1" y="12" width="7" height="1" fill="#fff"/><rect x="8" y="12" width="2" height="1" fill="#000"/><rect x="0" y="13" width="8" height="1" fill="#000"/></svg>
<div class="abs pane" style="left:4px;top:75px;width:156px;height:333px">
<svg class="abs" style="left:3px;top:2px" width="16" height="14" viewBox="0 0 16 14" shape-rendering="crispEdges" ><rect x="2" y="1" width="5" height="1" fill="#4b5076"/><rect x="1" y="2" width="1" height="1" fill="#4b5076"/><rect x="2" y="2" width="5" height="1" fill="#d4d0c8"/><rect x="7" y="2" width="1" height="1" fill="#4b5076"/><rect x="0" y="3" width="1" height="1" fill="#4b5076"/><rect x="1" y="3" width="7" height="1" fill="#d4d0c8"/><rect x="8" y="3" width="6" height="1" fill="#4b5076"/><rect x="0" y="4" width="1" height="1" fill="#4b5076"/><rect x="1" y="4" width="12" height="1" fill="#d4d0c8"/><rect x="13" y="4" width="1" height="1" fill="#4b5076"/><rect x="14" y="4" width="1" height="1" fill="#000"/><rect x="0" y="5" width="1" height="1" fill="#4b5076"/><rect x="1" y="5" width="12" height="1" fill="#d4d0c8"/><rect x="13" y="5" width="1" height="1" fill="#4b5076"/><rect x="14" y="5" width="1" height="1" fill="#000"/><rect x="0" y="6" width="1" height="1" fill="#4b5076"/><rect x="1" y="6" width="12" height="1" fill="#d4d0c8"/><rect x="13" y="6" width="1" height="1" fill="#4b5076"/><rect x="14" y="6" width="1" height="1" fill="#000"/><rect x="0" y="7" width="1" height="1" fill="#4b5076"/><rect x="1" y="7" width="12" height="1" fill="#d4d0c8"/><rect x="13" y="7" width="1" height="1" fill="#4b5076"/><rect x="14" y="7" width="1" height="1" fill="#000"/><rect x="0" y="8" width="1" height="1" fill="#4b5076"/><rect x="1" y="8" width="12" height="1" fill="#d4d0c8"/><rect x="13" y="8" width="1" height="1" fill="#4b5076"/><rect x="14" y="8" width="1" height="1" fill="#000"/><rect x="0" y="9" width="1" height="1" fill="#4b5076"/><rect x="1" y="9" width="12" height="1" fill="#d4d0c8"/><rect x="13" y="9" width="1" height="1" fill="#4b5076"/><rect x="14" y="9" width="1" height="1" fill="#000"/><rect x="0" y="10" width="1" height="1" fill="#4b5076"/><rect x="1" y="10" width="12" height="1" fill="#d4d0c8"/><rect x="13" y="10" width="1" height="1" fill="#4b5076"/><rect x="14" y="10" width="1" height="1" fill="#000"/><rect x="0" y="11" width="1" height="1" fill="#4b5076"/><rect x="1" y="11" width="12" height="1" fill="#d4d0c8"/><rect x="13" y="11" width="1" height="1" fill="#4b5076"/><rect x="14" y="11" width="1" height="1" fill="#000"/><rect x="0" y="12" width="14" height="1" fill="#4b5076"/><rect x="14" y="12" width="1" height="1" fill="#000"/><rect x="1" y="13" width="14" height="1" fill="#000"/></svg>
<span class="tx" style="left:23px;top:4px;transform:scaleX(0.9545);">Console Root</span>
<div class="abs" style="left:10px;top:18px;width:1px;height:9px;background:repeating-linear-gradient(#808080 0 1px,transparent 1px 2px)"></div>
<div class="abs" style="left:10px;top:26px;width:11px;height:1px;background:repeating-linear-gradient(90deg,#808080 0 1px,transparent 1px 2px)"></div>
<svg class="abs" style="left:21px;top:19px" width="17" height="16" viewBox="0 0 17 16" shape-rendering="crispEdges" ><rect x="0" y="0" width="15" height="1" fill="#4b5076"/><rect x="0" y="1" width="2" height="1" fill="#4b5076"/><rect x="2" y="1" width="1" height="1" fill="#fbf7e8"/><rect x="3" y="1" width="1" height="1" fill="#4b5076"/><rect x="4" y="1" width="1" height="1" fill="#fbf7e8"/><rect x="5" y="1" width="1" height="1" fill="#4b5076"/><rect x="6" y="1" width="1" height="1" fill="#fbf7e8"/><rect x="7" y="1" width="1" height="1" fill="#4b5076"/><rect x="8" y="1" width="1" height="1" fill="#fbf7e8"/><rect x="9" y="1" width="1" height="1" fill="#4b5076"/><rect x="10" y="1" width="1" height="1" fill="#fbf7e8"/><rect x="11" y="1" width="1" height="1" fill="#4b5076"/><rect x="12" y="1" width="1" height="1" fill="#fbf7e8"/><rect x="13" y="1" width="2" height="1" fill="#4b5076"/><rect x="15" y="1" width="1" height="1" fill="#000"/><rect x="0" y="2" width="1" height="1" fill="#4b5076"/><rect x="1" y="2" width="13" height="1" fill="#fbf7e8"/><rect x="14" y="2" width="1" height="1" fill="#4b5076"/><rect x="15" y="2" width="1" height="1" fill="#000"/><rect x="0" y="3" width="2" height="1" fill="#4b5076"/><rect x="2" y="3" width="2" height="1" fill="#fbf7e8"/><rect x="4" y="3" width="1" height="1" fill="#4b5076"/><rect x="5" y="3" width="9" height="1" fill="#fbf7e8"/><rect x="14" y="3" width="1" height="1" fill="#4b5076"/><rect x="15" y="3" width="1" height="1" fill="#000"/><rect x="0" y="4" width="1" height="1" fill="#4b5076"/><rect x="1" y="4" width="2" height="1" fill="#fbf7e8"/><rect x="3" y="4" width="3" height="1" fill="#4b5076"/><rect x="6" y="4" width="1" height="1" fill="#fbf7e8"/><rect x="7" y="4" width="1" height="1" fill="#000"/><rect x="8" y="4" width="2" height="1" fill="#fbf7e8"/><rect x="10" y="4" width="1" height="1" fill="#000"/><rect x="11" y="4" width="2" height="1" fill="#fbf7e8"/><rect x="13" y="4" width="1" height="1" fill="#000"/><rect x="14" y="4" width="1" height="1" fill="#4b5076"/><rect x="15" y="4" width="1" height="1" fill="#000"/><rect x="0" y="5" width="2" height="1" fill="#4b5076"/><rect x="2" y="5" width="2" height="1" fill="#fbf7e8"/><rect x="4" y="5" width="1" height="1" fill="#4b5076"/><rect x="5" y="5" width="3" height="1" fill="#fbf7e8"/><rect x="8" y="5" width="2" height="1" fill="#000"/><rect x="10" y="5" width="1" height="1" fill="#fff"/><rect x="11" y="5" width="2" height="1" fill="#000"/><rect x="13" y="5" width="1" height="1" fill="#fbf7e8"/><rect x="14" y="5" width="1" height="1" fill="#4b5076"/><rect x="15" y="5" width="1" height="1" fill="#000"/><rect x="0" y="6" width="1" height="1" fill="#4b5076"/><rect x="1" y="6" width="6" height="1" fill="#fbf7e8"/><rect x="7" y="6" width="1" height="1" fill="#000"/><rect x="8" y="6" width="5" height="1" fill="#fff"/><rect x="13" y="6" width="1" height="1" fill="#000"/><rect x="14" y="6" width="1" height="1" fill="#fbf7e8"/><rect x="15" y="6" width="2" height="1" fill="#000"/><rect x="0" y="7" width="2" height="1" fill="#4b5076"/><rect x="2" y="7" width="4" height="1" fill="#fbf7e8"/><rect x="6" y="7" width="2" height="1" fill="#000"/><rect x="8" y="7" width="1" height="1" fill="#fff"/><rect x="9" y="7" width="3" height="1" fill="#000"/><rect x="12" y="7" width="1" height="1" fill="#fff"/><rect x="13" y="7" width="4" height="1" fill="#000"/><rect x="0" y="8" width="1" height="1" fill="#4b5076"/><rect x="1" y="8" width="2" height="1" fill="#fbf7e8"/><rect x="3" y="8" width="4" height="1" fill="#000"/><rect x="7" y="8" width="2" height="1" fill="#fff"/><rect x="9" y="8" width="1" height="1" fill="#000"/><rect x="10" y="8" width="1" height="1" fill="#fff"/><rect x="11" y="8" width="1" height="1" fill="#000"/><rect x="12" y="8" width="2" height="1" fill="#fff"/><rect x="14" y="8" width="3" height="1" fill="#000"/><rect x="0" y="9" width="2" height="1" fill="#4b5076"/><rect x="2" y="9" width="4" height="1" fill="#fbf7e8"/><rect x="6" y="9" width="2" height="1" fill="#000"/><rect x="8" y="9" width="1" height="1" fill="#fff"/><rect x="9" y="9" width="1" height="1" fill="#000"/><rect x="10" y="9" width="1" height="1" fill="#fff"/><rect x="11" y="9" width="1" height="1" fill="#000"/><rect x="12" y="9" width="1" height="1" fill="#fff"/><rect x="13" y="9" width="4" height="1" fill="#000"/><rect x="0" y="10" width="1" height="1" fill="#4b5076"/><rect x="1" y="10" width="1" height="1" fill="#fbf7e8"/><rect x="2" y="10" width="1" height="1" fill="#4b5076"/><rect x="3" y="10" width="1" height="1" fill="#fbf7e8"/><rect x="4" y="10" width="1" height="1" fill="#4b5076"/><rect x="5" y="10" width="1" height="1" fill="#fbf7e8"/><rect x="6" y="10" width="2" height="1" fill="#000"/><rect x="8" y="10" width="1" height="1" fill="#fff"/><rect x="9" y="10" width="3" height="1" fill="#000"/><rect x="12" y="10" width="1" height="1" fill="#fff"/><rect x="13" y="10" width="4" height="1" fill="#000"/><rect x="0" y="11" width="6" height="1" fill="#4b5076"/><rect x="6" y="11" width="1" height="1" fill="#000"/><rect x="7" y="11" width="1" height="1" fill="#fff"/><rect x="8" y="11" width="1" height="1" fill="#000"/><rect x="9" y="11" width="3" height="1" fill="#fff"/><rect x="12" y="11" width="1" height="1" fill="#000"/><rect x="13" y="11" width="1" height="1" fill="#fff"/><rect x="14" y="11" width="3" height="1" fill="#000"/><rect x="1" y="12" width="15" height="1" fill="#000"/><rect x="6" y="13" width="2" height="1" fill="#000"/><rect x="8" y="13" width="1" height="1" fill="#fff"/><rect x="9" y="13" width="1" height="1" fill="#000"/><rect x="10" y="13" width="1" height="1" fill="#fff"/><rect x="11" y="13" width="1" height="1" fill="#000"/><rect x="12" y="13" width="1" height="1" fill="#fff"/><rect x="13" y="13" width="2" height="1" fill="#000"/><rect x="8" y="14" width="5" height="1" fill="#000"/><rect x="10" y="15" width="1" height="1" fill="#000"/></svg>
<div class="abs" style="left:40px;top:18px;width:106px;height:16px;background:#d4d0c8"></div>
<span class="tx" style="left:42px;top:20px;transform:scaleX(0.9951);">Certificate Templates</span>
</div>
<div class="abs pane" style="left:163px;top:75px;width:515px;height:333px">
<div class="abs" style="left:2px;top:2px;width:495px;height:313px;overflow:hidden">
<div class="hdr" style="left:0;width:205px"><span class="tx" style="left:6px;top:3px;transform:scaleX(0.9517);">Template Display Name</span><svg class="abs" style="left:129px;top:5px" width="9" height="7" viewBox="0 0 9 7" shape-rendering="crispEdges" ><rect x="4" y="0" width="1" height="1" fill="#4b5076"/><rect x="5" y="0" width="1" height="1" fill="#fff"/><rect x="3" y="1" width="1" height="1" fill="#4b5076"/><rect x="5" y="1" width="1" height="1" fill="#fff"/><rect x="3" y="2" width="1" height="1" fill="#4b5076"/><rect x="6" y="2" width="1" height="1" fill="#fff"/><rect x="2" y="3" width="1" height="1" fill="#4b5076"/><rect x="6" y="3" width="1" height="1" fill="#fff"/><rect x="2" y="4" width="1" height="1" fill="#4b5076"/><rect x="7" y="4" width="1" height="1" fill="#fff"/><rect x="1" y="5" width="1" height="1" fill="#4b5076"/><rect x="7" y="5" width="1" height="1" fill="#fff"/><rect x="0" y="6" width="1" height="1" fill="#4b5076"/><rect x="1" y="6" width="8" height="1" fill="#fff"/></svg></div>
<div class="hdr" style="left:205px;width:150px"><span class="tx" style="left:5px;top:3px;transform:scaleX(1.0116);">Supported Certification A...</span></div>
<div class="hdr" style="left:355px;width:50px"><span class="tx" style="left:5px;top:3px;transform:scaleX(1.0303);">Supp...</span></div>
<div class="hdr" style="left:405px;width:110px"><span class="tx" style="left:6px;top:3px;transform:scaleX(0.9689);">Autoenrollment</span></div>
<div class="row" style="top:18px"><svg class="abs" style="left:2px;top:1px" width="17" height="16" viewBox="0 0 17 16" shape-rendering="crispEdges" ><rect x="0" y="0" width="15" height="1" fill="#4b5076"/><rect x="0" y="1" width="2" height="1" fill="#4b5076"/><rect x="2" y="1" width="1" height="1" fill="#fbf7e8"/><rect x="3" y="1" width="1" height="1" fill="#4b5076"/><rect x="4" y="1" width="1" height="1" fill="#fbf7e8"/><rect x="5" y="1" width="1" height="1" fill="#4b5076"/><rect x="6" y="1" width="1" height="1" fill="#fbf7e8"/><rect x="7" y="1" width="1" height="1" fill="#4b5076"/><rect x="8" y="1" width="1" height="1" fill="#fbf7e8"/><rect x="9" y="1" width="1" height="1" fill="#4b5076"/><rect x="10" y="1" width="1" height="1" fill="#fbf7e8"/><rect x="11" y="1" width="1" height="1" fill="#4b5076"/><rect x="12" y="1" width="1" height="1" fill="#fbf7e8"/><rect x="13" y="1" width="2" height="1" fill="#4b5076"/><rect x="15" y="1" width="1" height="1" fill="#000"/><rect x="0" y="2" width="1" height="1" fill="#4b5076"/><rect x="1" y="2" width="13" height="1" fill="#fbf7e8"/><rect x="14" y="2" width="1" height="1" fill="#4b5076"/><rect x="15" y="2" width="1" height="1" fill="#000"/><rect x="0" y="3" width="2" height="1" fill="#4b5076"/><rect x="2" y="3" width="2" height="1" fill="#fbf7e8"/><rect x="4" y="3" width="1" height="1" fill="#4b5076"/><rect x="5" y="3" width="9" height="1" fill="#fbf7e8"/><rect x="14" y="3" width="1" height="1" fill="#4b5076"/><rect x="15" y="3" width="1" height="1" fill="#000"/><rect x="0" y="4" width="1" height="1" fill="#4b5076"/><rect x="1" y="4" width="2" height="1" fill="#fbf7e8"/><rect x="3" y="4" width="3" height="1" fill="#4b5076"/><rect x="6" y="4" width="1" height="1" fill="#fbf7e8"/><rect x="7" y="4" width="1" height="1" fill="#000"/><rect x="8" y="4" width="2" height="1" fill="#fbf7e8"/><rect x="10" y="4" width="1" height="1" fill="#000"/><rect x="11" y="4" width="2" height="1" fill="#fbf7e8"/><rect x="13" y="4" width="1" height="1" fill="#000"/><rect x="14" y="4" width="1" height="1" fill="#4b5076"/><rect x="15" y="4" width="1" height="1" fill="#000"/><rect x="0" y="5" width="2" height="1" fill="#4b5076"/><rect x="2" y="5" width="2" height="1" fill="#fbf7e8"/><rect x="4" y="5" width="1" height="1" fill="#4b5076"/><rect x="5" y="5" width="3" height="1" fill="#fbf7e8"/><rect x="8" y="5" width="2" height="1" fill="#000"/><rect x="10" y="5" width="1" height="1" fill="#fff"/><rect x="11" y="5" width="2" height="1" fill="#000"/><rect x="13" y="5" width="1" height="1" fill="#fbf7e8"/><rect x="14" y="5" width="1" height="1" fill="#4b5076"/><rect x="15" y="5" width="1" height="1" fill="#000"/><rect x="0" y="6" width="1" height="1" fill="#4b5076"/><rect x="1" y="6" width="6" height="1" fill="#fbf7e8"/><rect x="7" y="6" width="1" height="1" fill="#000"/><rect x="8" y="6" width="5" height="1" fill="#fff"/><rect x="13" y="6" width="1" height="1" fill="#000"/><rect x="14" y="6" width="1" height="1" fill="#fbf7e8"/><rect x="15" y="6" width="2" height="1" fill="#000"/><rect x="0" y="7" width="2" height="1" fill="#4b5076"/><rect x="2" y="7" width="4" height="1" fill="#fbf7e8"/><rect x="6" y="7" width="2" height="1" fill="#000"/><rect x="8" y="7" width="1" height="1" fill="#fff"/><rect x="9" y="7" width="3" height="1" fill="#000"/><rect x="12" y="7" width="1" height="1" fill="#fff"/><rect x="13" y="7" width="4" height="1" fill="#000"/><rect x="0" y="8" width="1" height="1" fill="#4b5076"/><rect x="1" y="8" width="2" height="1" fill="#fbf7e8"/><rect x="3" y="8" width="4" height="1" fill="#000"/><rect x="7" y="8" width="2" height="1" fill="#fff"/><rect x="9" y="8" width="1" height="1" fill="#000"/><rect x="10" y="8" width="1" height="1" fill="#fff"/><rect x="11" y="8" width="1" height="1" fill="#000"/><rect x="12" y="8" width="2" height="1" fill="#fff"/><rect x="14" y="8" width="3" height="1" fill="#000"/><rect x="0" y="9" width="2" height="1" fill="#4b5076"/><rect x="2" y="9" width="4" height="1" fill="#fbf7e8"/><rect x="6" y="9" width="2" height="1" fill="#000"/><rect x="8" y="9" width="1" height="1" fill="#fff"/><rect x="9" y="9" width="1" height="1" fill="#000"/><rect x="10" y="9" width="1" height="1" fill="#fff"/><rect x="11" y="9" width="1" height="1" fill="#000"/><rect x="12" y="9" width="1" height="1" fill="#fff"/><rect x="13" y="9" width="4" height="1" fill="#000"/><rect x="0" y="10" width="1" height="1" fill="#4b5076"/><rect x="1" y="10" width="1" height="1" fill="#fbf7e8"/><rect x="2" y="10" width="1" height="1" fill="#4b5076"/><rect x="3" y="10" width="1" height="1" fill="#fbf7e8"/><rect x="4" y="10" width="1" height="1" fill="#4b5076"/><rect x="5" y="10" width="1" height="1" fill="#fbf7e8"/><rect x="6" y="10" width="2" height="1" fill="#000"/><rect x="8" y="10" width="1" height="1" fill="#fff"/><rect x="9" y="10" width="3" height="1" fill="#000"/><rect x="12" y="10" width="1" height="1" fill="#fff"/><rect x="13" y="10" width="4" height="1" fill="#000"/><rect x="0" y="11" width="6" height="1" fill="#4b5076"/><rect x="6" y="11" width="1" height="1" fill="#000"/><rect x="7" y="11" width="1" height="1" fill="#fff"/><rect x="8" y="11" width="1" height="1" fill="#000"/><rect x="9" y="11" width="3" height="1" fill="#fff"/><rect x="12" y="11" width="1" height="1" fill="#000"/><rect x="13" y="11" width="1" height="1" fill="#fff"/><rect x="14" y="11" width="3" height="1" fill="#000"/><rect x="1" y="12" width="15" height="1" fill="#000"/><rect x="6" y="13" width="2" height="1" fill="#000"/><rect x="8" y="13" width="1" height="1" fill="#fff"/><rect x="9" y="13" width="1" height="1" fill="#000"/><rect x="10" y="13" width="1" height="1" fill="#fff"/><rect x="11" y="13" width="1" height="1" fill="#000"/><rect x="12" y="13" width="1" height="1" fill="#fff"/><rect x="13" y="13" width="2" height="1" fill="#000"/><rect x="8" y="14" width="5" height="1" fill="#000"/><rect x="10" y="15" width="1" height="1" fill="#000"/></svg><span class="tx" style="left:20px;top:4px;transform:scaleX(0.9723);">Administrator</span><span class="tx" style="left:210px;top:4px;transform:scaleX(0.9771);">Windows 2000 and later</span><span class="tx" style="left:360px;top:4px;transform:scaleX(1.0714);">1.1</span><span class="tx" style="left:410px;top:4px;transform:scaleX(0.9946);">Not allowed</span></div>
<div class="row" style="top:35px"><svg class="abs" style="left:2px;top:1px" width="17" height="16" viewBox="0 0 17 16" shape-rendering="crispEdges" ><rect x="0" y="0" width="15" height="1" fill="#4b5076"/><rect x="0" y="1" width="2" height="1" fill="#4b5076"/><rect x="2" y="1" width="1" height="1" fill="#fbf7e8"/><rect x="3" y="1" width="1" height="1" fill="#4b5076"/><rect x="4" y="1" width="1" height="1" fill="#fbf7e8"/><rect x="5" y="1" width="1" height="1" fill="#4b5076"/><rect x="6" y="1" width="1" height="1" fill="#fbf7e8"/><rect x="7" y="1" width="1" height="1" fill="#4b5076"/><rect x="8" y="1" width="1" height="1" fill="#fbf7e8"/><rect x="9" y="1" width="1" height="1" fill="#4b5076"/><rect x="10" y="1" width="1" height="1" fill="#fbf7e8"/><rect x="11" y="1" width="1" height="1" fill="#4b5076"/><rect x="12" y="1" width="1" height="1" fill="#fbf7e8"/><rect x="13" y="1" width="2" height="1" fill="#4b5076"/><rect x="15" y="1" width="1" height="1" fill="#000"/><rect x="0" y="2" width="1" height="1" fill="#4b5076"/><rect x="1" y="2" width="13" height="1" fill="#fbf7e8"/><rect x="14" y="2" width="1" height="1" fill="#4b5076"/><rect x="15" y="2" width="1" height="1" fill="#000"/><rect x="0" y="3" width="2" height="1" fill="#4b5076"/><rect x="2" y="3" width="2" height="1" fill="#fbf7e8"/><rect x="4" y="3" width="1" height="1" fill="#4b5076"/><rect x="5" y="3" width="9" height="1" fill="#fbf7e8"/><rect x="14" y="3" width="1" height="1" fill="#4b5076"/><rect x="15" y="3" width="1" height="1" fill="#000"/><rect x="0" y="4" width="1" height="1" fill="#4b5076"/><rect x="1" y="4" width="2" height="1" fill="#fbf7e8"/><rect x="3" y="4" width="3" height="1" fill="#4b5076"/><rect x="6" y="4" width="1" height="1" fill="#fbf7e8"/><rect x="7" y="4" width="1" height="1" fill="#000"/><rect x="8" y="4" width="2" height="1" fill="#fbf7e8"/><rect x="10" y="4" width="1" height="1" fill="#000"/><rect x="11" y="4" width="2" height="1" fill="#fbf7e8"/><rect x="13" y="4" width="1" height="1" fill="#000"/><rect x="14" y="4" width="1" height="1" fill="#4b5076"/><rect x="15" y="4" width="1" height="1" fill="#000"/><rect x="0" y="5" width="2" height="1" fill="#4b5076"/><rect x="2" y="5" width="2" height="1" fill="#fbf7e8"/><rect x="4" y="5" width="1" height="1" fill="#4b5076"/><rect x="5" y="5" width="3" height="1" fill="#fbf7e8"/><rect x="8" y="5" width="2" height="1" fill="#000"/><rect x="10" y="5" width="1" height="1" fill="#fff"/><rect x="11" y="5" width="2" height="1" fill="#000"/><rect x="13" y="5" width="1" height="1" fill="#fbf7e8"/><rect x="14" y="5" width="1" height="1" fill="#4b5076"/><rect x="15" y="5" width="1" height="1" fill="#000"/><rect x="0" y="6" width="1" height="1" fill="#4b5076"/><rect x="1" y="6" width="6" height="1" fill="#fbf7e8"/><rect x="7" y="6" width="1" height="1" fill="#000"/><rect x="8" y="6" width="5" height="1" fill="#fff"/><rect x="13" y="6" width="1" height="1" fill="#000"/><rect x="14" y="6" width="1" height="1" fill="#fbf7e8"/><rect x="15" y="6" width="2" height="1" fill="#000"/><rect x="0" y="7" width="2" height="1" fill="#4b5076"/><rect x="2" y="7" width="4" height="1" fill="#fbf7e8"/><rect x="6" y="7" width="2" height="1" fill="#000"/><rect x="8" y="7" width="1" height="1" fill="#fff"/><rect x="9" y="7" width="3" height="1" fill="#000"/><rect x="12" y="7" width="1" height="1" fill="#fff"/><rect x="13" y="7" width="4" height="1" fill="#000"/><rect x="0" y="8" width="1" height="1" fill="#4b5076"/><rect x="1" y="8" width="2" height="1" fill="#fbf7e8"/><rect x="3" y="8" width="4" height="1" fill="#000"/><rect x="7" y="8" width="2" height="1" fill="#fff"/><rect x="9" y="8" width="1" height="1" fill="#000"/><rect x="10" y="8" width="1" height="1" fill="#fff"/><rect x="11" y="8" width="1" height="1" fill="#000"/><rect x="12" y="8" width="2" height="1" fill="#fff"/><rect x="14" y="8" width="3" height="1" fill="#000"/><rect x="0" y="9" width="2" height="1" fill="#4b5076"/><rect x="2" y="9" width="4" height="1" fill="#fbf7e8"/><rect x="6" y="9" width="2" height="1" fill="#000"/><rect x="8" y="9" width="1" height="1" fill="#fff"/><rect x="9" y="9" width="1" height="1" fill="#000"/><rect x="10" y="9" width="1" height="1" fill="#fff"/><rect x="11" y="9" width="1" height="1" fill="#000"/><rect x="12" y="9" width="1" height="1" fill="#fff"/><rect x="13" y="9" width="4" height="1" fill="#000"/><rect x="0" y="10" width="1" height="1" fill="#4b5076"/><rect x="1" y="10" width="1" height="1" fill="#fbf7e8"/><rect x="2" y="10" width="1" height="1" fill="#4b5076"/><rect x="3" y="10" width="1" height="1" fill="#fbf7e8"/><rect x="4" y="10" width="1" height="1" fill="#4b5076"/><rect x="5" y="10" width="1" height="1" fill="#fbf7e8"/><rect x="6" y="10" width="2" height="1" fill="#000"/><rect x="8" y="10" width="1" height="1" fill="#fff"/><rect x="9" y="10" width="3" height="1" fill="#000"/><rect x="12" y="10" width="1" height="1" fill="#fff"/><rect x="13" y="10" width="4" height="1" fill="#000"/><rect x="0" y="11" width="6" height="1" fill="#4b5076"/><rect x="6" y="11" width="1" height="1" fill="#000"/><rect x="7" y="11" width="1" height="1" fill="#fff"/><rect x="8" y="11" width="1" height="1" fill="#000"/><rect x="9" y="11" width="3" height="1" fill="#fff"/><rect x="12" y="11" width="1" height="1" fill="#000"/><rect x="13" y="11" width="1" height="1" fill="#fff"/><rect x="14" y="11" width="3" height="1" fill="#000"/><rect x="1" y="12" width="15" height="1" fill="#000"/><rect x="6" y="13" width="2" height="1" fill="#000"/><rect x="8" y="13" width="1" height="1" fill="#fff"/><rect x="9" y="13" width="1" height="1" fill="#000"/><rect x="10" y="13" width="1" height="1" fill="#fff"/><rect x="11" y="13" width="1" height="1" fill="#000"/><rect x="12" y="13" width="1" height="1" fill="#fff"/><rect x="13" y="13" width="2" height="1" fill="#000"/><rect x="8" y="14" width="5" height="1" fill="#000"/><rect x="10" y="15" width="1" height="1" fill="#000"/></svg><span class="tx" style="left:20px;top:4px;transform:scaleX(0.978);">Authenticated Session</span><span class="tx" style="left:210px;top:4px;transform:scaleX(0.9771);">Windows 2000 and later</span><span class="tx" style="left:360px;top:4px;transform:scaleX(1.0714);">1.1</span><span class="tx" style="left:410px;top:4px;transform:scaleX(0.9946);">Not allowed</span></div>
<div class="row" style="top:52px"><svg class="abs" style="left:2px;top:1px" width="17" height="16" viewBox="0 0 17 16" shape-rendering="crispEdges" ><rect x="0" y="0" width="15" height="1" fill="#4b5076"/><rect x="0" y="1" width="2" height="1" fill="#4b5076"/><rect x="2" y="1" width="1" height="1" fill="#fbf7e8"/><rect x="3" y="1" width="1" height="1" fill="#4b5076"/><rect x="4" y="1" width="1" height="1" fill="#fbf7e8"/><rect x="5" y="1" width="1" height="1" fill="#4b5076"/><rect x="6" y="1" width="1" height="1" fill="#fbf7e8"/><rect x="7" y="1" width="1" height="1" fill="#4b5076"/><rect x="8" y="1" width="1" height="1" fill="#fbf7e8"/><rect x="9" y="1" width="1" height="1" fill="#4b5076"/><rect x="10" y="1" width="1" height="1" fill="#fbf7e8"/><rect x="11" y="1" width="1" height="1" fill="#4b5076"/><rect x="12" y="1" width="1" height="1" fill="#fbf7e8"/><rect x="13" y="1" width="2" height="1" fill="#4b5076"/><rect x="15" y="1" width="1" height="1" fill="#000"/><rect x="0" y="2" width="1" height="1" fill="#4b5076"/><rect x="1" y="2" width="13" height="1" fill="#fbf7e8"/><rect x="14" y="2" width="1" height="1" fill="#4b5076"/><rect x="15" y="2" width="1" height="1" fill="#000"/><rect x="0" y="3" width="2" height="1" fill="#4b5076"/><rect x="2" y="3" width="2" height="1" fill="#fbf7e8"/><rect x="4" y="3" width="1" height="1" fill="#4b5076"/><rect x="5" y="3" width="9" height="1" fill="#fbf7e8"/><rect x="14" y="3" width="1" height="1" fill="#4b5076"/><rect x="15" y="3" width="1" height="1" fill="#000"/><rect x="0" y="4" width="1" height="1" fill="#4b5076"/><rect x="1" y="4" width="2" height="1" fill="#fbf7e8"/><rect x="3" y="4" width="3" height="1" fill="#4b5076"/><rect x="6" y="4" width="1" height="1" fill="#fbf7e8"/><rect x="7" y="4" width="1" height="1" fill="#000"/><rect x="8" y="4" width="2" height="1" fill="#fbf7e8"/><rect x="10" y="4" width="1" height="1" fill="#000"/><rect x="11" y="4" width="2" height="1" fill="#fbf7e8"/><rect x="13" y="4" width="1" height="1" fill="#000"/><rect x="14" y="4" width="1" height="1" fill="#4b5076"/><rect x="15" y="4" width="1" height="1" fill="#000"/><rect x="0" y="5" width="2" height="1" fill="#4b5076"/><rect x="2" y="5" width="2" height="1" fill="#fbf7e8"/><rect x="4" y="5" width="1" height="1" fill="#4b5076"/><rect x="5" y="5" width="3" height="1" fill="#fbf7e8"/><rect x="8" y="5" width="2" height="1" fill="#000"/><rect x="10" y="5" width="1" height="1" fill="#fff"/><rect x="11" y="5" width="2" height="1" fill="#000"/><rect x="13" y="5" width="1" height="1" fill="#fbf7e8"/><rect x="14" y="5" width="1" height="1" fill="#4b5076"/><rect x="15" y="5" width="1" height="1" fill="#000"/><rect x="0" y="6" width="1" height="1" fill="#4b5076"/><rect x="1" y="6" width="6" height="1" fill="#fbf7e8"/><rect x="7" y="6" width="1" height="1" fill="#000"/><rect x="8" y="6" width="5" height="1" fill="#fff"/><rect x="13" y="6" width="1" height="1" fill="#000"/><rect x="14" y="6" width="1" height="1" fill="#fbf7e8"/><rect x="15" y="6" width="2" height="1" fill="#000"/><rect x="0" y="7" width="2" height="1" fill="#4b5076"/><rect x="2" y="7" width="4" height="1" fill="#fbf7e8"/><rect x="6" y="7" width="2" height="1" fill="#000"/><rect x="8" y="7" width="1" height="1" fill="#fff"/><rect x="9" y="7" width="3" height="1" fill="#000"/><rect x="12" y="7" width="1" height="1" fill="#fff"/><rect x="13" y="7" width="4" height="1" fill="#000"/><rect x="0" y="8" width="1" height="1" fill="#4b5076"/><rect x="1" y="8" width="2" height="1" fill="#fbf7e8"/><rect x="3" y="8" width="4" height="1" fill="#000"/><rect x="7" y="8" width="2" height="1" fill="#fff"/><rect x="9" y="8" width="1" height="1" fill="#000"/><rect x="10" y="8" width="1" height="1" fill="#fff"/><rect x="11" y="8" width="1" height="1" fill="#000"/><rect x="12" y="8" width="2" height="1" fill="#fff"/><rect x="14" y="8" width="3" height="1" fill="#000"/><rect x="0" y="9" width="2" height="1" fill="#4b5076"/><rect x="2" y="9" width="4" height="1" fill="#fbf7e8"/><rect x="6" y="9" width="2" height="1" fill="#000"/><rect x="8" y="9" width="1" height="1" fill="#fff"/><rect x="9" y="9" width="1" height="1" fill="#000"/><rect x="10" y="9" width="1" height="1" fill="#fff"/><rect x="11" y="9" width="1" height="1" fill="#000"/><rect x="12" y="9" width="1" height="1" fill="#fff"/><rect x="13" y="9" width="4" height="1" fill="#000"/><rect x="0" y="10" width="1" height="1" fill="#4b5076"/><rect x="1" y="10" width="1" height="1" fill="#fbf7e8"/><rect x="2" y="10" width="1" height="1" fill="#4b5076"/><rect x="3" y="10" width="1" height="1" fill="#fbf7e8"/><rect x="4" y="10" width="1" height="1" fill="#4b5076"/><rect x="5" y="10" width="1" height="1" fill="#fbf7e8"/><rect x="6" y="10" width="2" height="1" fill="#000"/><rect x="8" y="10" width="1" height="1" fill="#fff"/><rect x="9" y="10" width="3" height="1" fill="#000"/><rect x="12" y="10" width="1" height="1" fill="#fff"/><rect x="13" y="10" width="4" height="1" fill="#000"/><rect x="0" y="11" width="6" height="1" fill="#4b5076"/><rect x="6" y="11" width="1" height="1" fill="#000"/><rect x="7" y="11" width="1" height="1" fill="#fff"/><rect x="8" y="11" width="1" height="1" fill="#000"/><rect x="9" y="11" width="3" height="1" fill="#fff"/><rect x="12" y="11" width="1" height="1" fill="#000"/><rect x="13" y="11" width="1" height="1" fill="#fff"/><rect x="14" y="11" width="3" height="1" fill="#000"/><rect x="1" y="12" width="15" height="1" fill="#000"/><rect x="6" y="13" width="2" height="1" fill="#000"/><rect x="8" y="13" width="1" height="1" fill="#fff"/><rect x="9" y="13" width="1" height="1" fill="#000"/><rect x="10" y="13" width="1" height="1" fill="#fff"/><rect x="11" y="13" width="1" height="1" fill="#000"/><rect x="12" y="13" width="1" height="1" fill="#fff"/><rect x="13" y="13" width="2" height="1" fill="#000"/><rect x="8" y="14" width="5" height="1" fill="#000"/><rect x="10" y="15" width="1" height="1" fill="#000"/></svg><span class="tx" style="left:19px;top:4px;transform:scaleX(0.888);">Basic EFS</span><span class="tx" style="left:210px;top:4px;transform:scaleX(0.9771);">Windows 2000 and later</span><span class="tx" style="left:360px;top:4px;transform:scaleX(1.0714);">1.1</span><span class="tx" style="left:410px;top:4px;transform:scaleX(0.9946);">Not allowed</span></div>
<div class="row" style="top:69px"><svg class="abs" style="left:2px;top:1px" width="17" height="16" viewBox="0 0 17 16" shape-rendering="crispEdges" ><rect x="0" y="0" width="15" height="1" fill="#4b5076"/><rect x="0" y="1" width="2" height="1" fill="#4b5076"/><rect x="2" y="1" width="1" height="1" fill="#fbf7e8"/><rect x="3" y="1" width="1" height="1" fill="#4b5076"/><rect x="4" y="1" width="1" height="1" fill="#fbf7e8"/><rect x="5" y="1" width="1" height="1" fill="#4b5076"/><rect x="6" y="1" width="1" height="1" fill="#fbf7e8"/><rect x="7" y="1" width="1" height="1" fill="#4b5076"/><rect x="8" y="1" width="1" height="1" fill="#fbf7e8"/><rect x="9" y="1" width="1" height="1" fill="#4b5076"/><rect x="10" y="1" width="1" height="1" fill="#fbf7e8"/><rect x="11" y="1" width="1" height="1" fill="#4b5076"/><rect x="12" y="1" width="1" height="1" fill="#fbf7e8"/><rect x="13" y="1" width="2" height="1" fill="#4b5076"/><rect x="15" y="1" width="1" height="1" fill="#000"/><rect x="0" y="2" width="1" height="1" fill="#4b5076"/><rect x="1" y="2" width="13" height="1" fill="#fbf7e8"/><rect x="14" y="2" width="1" height="1" fill="#4b5076"/><rect x="15" y="2" width="1" height="1" fill="#000"/><rect x="0" y="3" width="2" height="1" fill="#4b5076"/><rect x="2" y="3" width="2" height="1" fill="#fbf7e8"/><rect x="4" y="3" width="1" height="1" fill="#4b5076"/><rect x="5" y="3" width="9" height="1" fill="#fbf7e8"/><rect x="14" y="3" width="1" height="1" fill="#4b5076"/><rect x="15" y="3" width="1" height="1" fill="#000"/><rect x="0" y="4" width="1" height="1" fill="#4b5076"/><rect x="1" y="4" width="2" height="1" fill="#fbf7e8"/><rect x="3" y="4" width="3" height="1" fill="#4b5076"/><rect x="6" y="4" width="1" height="1" fill="#fbf7e8"/><rect x="7" y="4" width="1" height="1" fill="#000"/><rect x="8" y="4" width="2" height="1" fill="#fbf7e8"/><rect x="10" y="4" width="1" height="1" fill="#000"/><rect x="11" y="4" width="2" height="1" fill="#fbf7e8"/><rect x="13" y="4" width="1" height="1" fill="#000"/><rect x="14" y="4" width="1" height="1" fill="#4b5076"/><rect x="15" y="4" width="1" height="1" fill="#000"/><rect x="0" y="5" width="2" height="1" fill="#4b5076"/><rect x="2" y="5" width="2" height="1" fill="#fbf7e8"/><rect x="4" y="5" width="1" height="1" fill="#4b5076"/><rect x="5" y="5" width="3" height="1" fill="#fbf7e8"/><rect x="8" y="5" width="2" height="1" fill="#000"/><rect x="10" y="5" width="1" height="1" fill="#fff"/><rect x="11" y="5" width="2" height="1" fill="#000"/><rect x="13" y="5" width="1" height="1" fill="#fbf7e8"/><rect x="14" y="5" width="1" height="1" fill="#4b5076"/><rect x="15" y="5" width="1" height="1" fill="#000"/><rect x="0" y="6" width="1" height="1" fill="#4b5076"/><rect x="1" y="6" width="6" height="1" fill="#fbf7e8"/><rect x="7" y="6" width="1" height="1" fill="#000"/><rect x="8" y="6" width="5" height="1" fill="#fff"/><rect x="13" y="6" width="1" height="1" fill="#000"/><rect x="14" y="6" width="1" height="1" fill="#fbf7e8"/><rect x="15" y="6" width="2" height="1" fill="#000"/><rect x="0" y="7" width="2" height="1" fill="#4b5076"/><rect x="2" y="7" width="4" height="1" fill="#fbf7e8"/><rect x="6" y="7" width="2" height="1" fill="#000"/><rect x="8" y="7" width="1" height="1" fill="#fff"/><rect x="9" y="7" width="3" height="1" fill="#000"/><rect x="12" y="7" width="1" height="1" fill="#fff"/><rect x="13" y="7" width="4" height="1" fill="#000"/><rect x="0" y="8" width="1" height="1" fill="#4b5076"/><rect x="1" y="8" width="2" height="1" fill="#fbf7e8"/><rect x="3" y="8" width="4" height="1" fill="#000"/><rect x="7" y="8" width="2" height="1" fill="#fff"/><rect x="9" y="8" width="1" height="1" fill="#000"/><rect x="10" y="8" width="1" height="1" fill="#fff"/><rect x="11" y="8" width="1" height="1" fill="#000"/><rect x="12" y="8" width="2" height="1" fill="#fff"/><rect x="14" y="8" width="3" height="1" fill="#000"/><rect x="0" y="9" width="2" height="1" fill="#4b5076"/><rect x="2" y="9" width="4" height="1" fill="#fbf7e8"/><rect x="6" y="9" width="2" height="1" fill="#000"/><rect x="8" y="9" width="1" height="1" fill="#fff"/><rect x="9" y="9" width="1" height="1" fill="#000"/><rect x="10" y="9" width="1" height="1" fill="#fff"/><rect x="11" y="9" width="1" height="1" fill="#000"/><rect x="12" y="9" width="1" height="1" fill="#fff"/><rect x="13" y="9" width="4" height="1" fill="#000"/><rect x="0" y="10" width="1" height="1" fill="#4b5076"/><rect x="1" y="10" width="1" height="1" fill="#fbf7e8"/><rect x="2" y="10" width="1" height="1" fill="#4b5076"/><rect x="3" y="10" width="1" height="1" fill="#fbf7e8"/><rect x="4" y="10" width="1" height="1" fill="#4b5076"/><rect x="5" y="10" width="1" height="1" fill="#fbf7e8"/><rect x="6" y="10" width="2" height="1" fill="#000"/><rect x="8" y="10" width="1" height="1" fill="#fff"/><rect x="9" y="10" width="3" height="1" fill="#000"/><rect x="12" y="10" width="1" height="1" fill="#fff"/><rect x="13" y="10" width="4" height="1" fill="#000"/><rect x="0" y="11" width="6" height="1" fill="#4b5076"/><rect x="6" y="11" width="1" height="1" fill="#000"/><rect x="7" y="11" width="1" height="1" fill="#fff"/><rect x="8" y="11" width="1" height="1" fill="#000"/><rect x="9" y="11" width="3" height="1" fill="#fff"/><rect x="12" y="11" width="1" height="1" fill="#000"/><rect x="13" y="11" width="1" height="1" fill="#fff"/><rect x="14" y="11" width="3" height="1" fill="#000"/><rect x="1" y="12" width="15" height="1" fill="#000"/><rect x="6" y="13" width="2" height="1" fill="#000"/><rect x="8" y="13" width="1" height="1" fill="#fff"/><rect x="9" y="13" width="1" height="1" fill="#000"/><rect x="10" y="13" width="1" height="1" fill="#fff"/><rect x="11" y="13" width="1" height="1" fill="#000"/><rect x="12" y="13" width="1" height="1" fill="#fff"/><rect x="13" y="13" width="2" height="1" fill="#000"/><rect x="8" y="14" width="5" height="1" fill="#000"/><rect x="10" y="15" width="1" height="1" fill="#000"/></svg><span class="tx" style="left:20px;top:4px;transform:scaleX(0.9621);">CA Exchange</span><span class="tx" style="left:210px;top:4px;transform:scaleX(0.9976);">Whistler and later</span><span class="tx" style="left:360px;top:4px;transform:scaleX(1.0462);">103.0</span><span class="tx" style="left:410px;top:4px;transform:scaleX(0.9946);">Not allowed</span></div>
<div class="row" style="top:86px"><svg class="abs" style="left:2px;top:1px" width="17" height="16" viewBox="0 0 17 16" shape-rendering="crispEdges" ><rect x="0" y="0" width="15" height="1" fill="#4b5076"/><rect x="0" y="1" width="2" height="1" fill="#4b5076"/><rect x="2" y="1" width="1" height="1" fill="#fbf7e8"/><rect x="3" y="1" width="1" height="1" fill="#4b5076"/><rect x="4" y="1" width="1" height="1" fill="#fbf7e8"/><rect x="5" y="1" width="1" height="1" fill="#4b5076"/><rect x="6" y="1" width="1" height="1" fill="#fbf7e8"/><rect x="7" y="1" width="1" height="1" fill="#4b5076"/><rect x="8" y="1" width="1" height="1" fill="#fbf7e8"/><rect x="9" y="1" width="1" height="1" fill="#4b5076"/><rect x="10" y="1" width="1" height="1" fill="#fbf7e8"/><rect x="11" y="1" width="1" height="1" fill="#4b5076"/><rect x="12" y="1" width="1" height="1" fill="#fbf7e8"/><rect x="13" y="1" width="2" height="1" fill="#4b5076"/><rect x="15" y="1" width="1" height="1" fill="#000"/><rect x="0" y="2" width="1" height="1" fill="#4b5076"/><rect x="1" y="2" width="13" height="1" fill="#fbf7e8"/><rect x="14" y="2" width="1" height="1" fill="#4b5076"/><rect x="15" y="2" width="1" height="1" fill="#000"/><rect x="0" y="3" width="2" height="1" fill="#4b5076"/><rect x="2" y="3" width="2" height="1" fill="#fbf7e8"/><rect x="4" y="3" width="1" height="1" fill="#4b5076"/><rect x="5" y="3" width="9" height="1" fill="#fbf7e8"/><rect x="14" y="3" width="1" height="1" fill="#4b5076"/><rect x="15" y="3" width="1" height="1" fill="#000"/><rect x="0" y="4" width="1" height="1" fill="#4b5076"/><rect x="1" y="4" width="2" height="1" fill="#fbf7e8"/><rect x="3" y="4" width="3" height="1" fill="#4b5076"/><rect x="6" y="4" width="1" height="1" fill="#fbf7e8"/><rect x="7" y="4" width="1" height="1" fill="#000"/><rect x="8" y="4" width="2" height="1" fill="#fbf7e8"/><rect x="10" y="4" width="1" height="1" fill="#000"/><rect x="11" y="4" width="2" height="1" fill="#fbf7e8"/><rect x="13" y="4" width="1" height="1" fill="#000"/><rect x="14" y="4" width="1" height="1" fill="#4b5076"/><rect x="15" y="4" width="1" height="1" fill="#000"/><rect x="0" y="5" width="2" height="1" fill="#4b5076"/><rect x="2" y="5" width="2" height="1" fill="#fbf7e8"/><rect x="4" y="5" width="1" height="1" fill="#4b5076"/><rect x="5" y="5" width="3" height="1" fill="#fbf7e8"/><rect x="8" y="5" width="2" height="1" fill="#000"/><rect x="10" y="5" width="1" height="1" fill="#fff"/><rect x="11" y="5" width="2" height="1" fill="#000"/><rect x="13" y="5" width="1" height="1" fill="#fbf7e8"/><rect x="14" y="5" width="1" height="1" fill="#4b5076"/><rect x="15" y="5" width="1" height="1" fill="#000"/><rect x="0" y="6" width="1" height="1" fill="#4b5076"/><rect x="1" y="6" width="6" height="1" fill="#fbf7e8"/><rect x="7" y="6" width="1" height="1" fill="#000"/><rect x="8" y="6" width="5" height="1" fill="#fff"/><rect x="13" y="6" width="1" height="1" fill="#000"/><rect x="14" y="6" width="1" height="1" fill="#fbf7e8"/><rect x="15" y="6" width="2" height="1" fill="#000"/><rect x="0" y="7" width="2" height="1" fill="#4b5076"/><rect x="2" y="7" width="4" height="1" fill="#fbf7e8"/><rect x="6" y="7" width="2" height="1" fill="#000"/><rect x="8" y="7" width="1" height="1" fill="#fff"/><rect x="9" y="7" width="3" height="1" fill="#000"/><rect x="12" y="7" width="1" height="1" fill="#fff"/><rect x="13" y="7" width="4" height="1" fill="#000"/><rect x="0" y="8" width="1" height="1" fill="#4b5076"/><rect x="1" y="8" width="2" height="1" fill="#fbf7e8"/><rect x="3" y="8" width="4" height="1" fill="#000"/><rect x="7" y="8" width="2" height="1" fill="#fff"/><rect x="9" y="8" width="1" height="1" fill="#000"/><rect x="10" y="8" width="1" height="1" fill="#fff"/><rect x="11" y="8" width="1" height="1" fill="#000"/><rect x="12" y="8" width="2" height="1" fill="#fff"/><rect x="14" y="8" width="3" height="1" fill="#000"/><rect x="0" y="9" width="2" height="1" fill="#4b5076"/><rect x="2" y="9" width="4" height="1" fill="#fbf7e8"/><rect x="6" y="9" width="2" height="1" fill="#000"/><rect x="8" y="9" width="1" height="1" fill="#fff"/><rect x="9" y="9" width="1" height="1" fill="#000"/><rect x="10" y="9" width="1" height="1" fill="#fff"/><rect x="11" y="9" width="1" height="1" fill="#000"/><rect x="12" y="9" width="1" height="1" fill="#fff"/><rect x="13" y="9" width="4" height="1" fill="#000"/><rect x="0" y="10" width="1" height="1" fill="#4b5076"/><rect x="1" y="10" width="1" height="1" fill="#fbf7e8"/><rect x="2" y="10" width="1" height="1" fill="#4b5076"/><rect x="3" y="10" width="1" height="1" fill="#fbf7e8"/><rect x="4" y="10" width="1" height="1" fill="#4b5076"/><rect x="5" y="10" width="1" height="1" fill="#fbf7e8"/><rect x="6" y="10" width="2" height="1" fill="#000"/><rect x="8" y="10" width="1" height="1" fill="#fff"/><rect x="9" y="10" width="3" height="1" fill="#000"/><rect x="12" y="10" width="1" height="1" fill="#fff"/><rect x="13" y="10" width="4" height="1" fill="#000"/><rect x="0" y="11" width="6" height="1" fill="#4b5076"/><rect x="6" y="11" width="1" height="1" fill="#000"/><rect x="7" y="11" width="1" height="1" fill="#fff"/><rect x="8" y="11" width="1" height="1" fill="#000"/><rect x="9" y="11" width="3" height="1" fill="#fff"/><rect x="12" y="11" width="1" height="1" fill="#000"/><rect x="13" y="11" width="1" height="1" fill="#fff"/><rect x="14" y="11" width="3" height="1" fill="#000"/><rect x="1" y="12" width="15" height="1" fill="#000"/><rect x="6" y="13" width="2" height="1" fill="#000"/><rect x="8" y="13" width="1" height="1" fill="#fff"/><rect x="9" y="13" width="1" height="1" fill="#000"/><rect x="10" y="13" width="1" height="1" fill="#fff"/><rect x="11" y="13" width="1" height="1" fill="#000"/><rect x="12" y="13" width="1" height="1" fill="#fff"/><rect x="13" y="13" width="2" height="1" fill="#000"/><rect x="8" y="14" width="5" height="1" fill="#000"/><rect x="10" y="15" width="1" height="1" fill="#000"/></svg><span class="tx" style="left:20px;top:4px;transform:scaleX(0.939);">CEP Encryption</span><span class="tx" style="left:210px;top:4px;transform:scaleX(0.9771);">Windows 2000 and later</span><span class="tx" style="left:360px;top:4px;transform:scaleX(1.0714);">1.1</span><span class="tx" style="left:410px;top:4px;transform:scaleX(0.9946);">Not allowed</span></div>
<div class="row" style="top:103px"><svg class="abs" style="left:2px;top:1px" width="17" height="16" viewBox="0 0 17 16" shape-rendering="crispEdges" ><rect x="0" y="0" width="15" height="1" fill="#4b5076"/><rect x="0" y="1" width="2" height="1" fill="#4b5076"/><rect x="2" y="1" width="1" height="1" fill="#fbf7e8"/><rect x="3" y="1" width="1" height="1" fill="#4b5076"/><rect x="4" y="1" width="1" height="1" fill="#fbf7e8"/><rect x="5" y="1" width="1" height="1" fill="#4b5076"/><rect x="6" y="1" width="1" height="1" fill="#fbf7e8"/><rect x="7" y="1" width="1" height="1" fill="#4b5076"/><rect x="8" y="1" width="1" height="1" fill="#fbf7e8"/><rect x="9" y="1" width="1" height="1" fill="#4b5076"/><rect x="10" y="1" width="1" height="1" fill="#fbf7e8"/><rect x="11" y="1" width="1" height="1" fill="#4b5076"/><rect x="12" y="1" width="1" height="1" fill="#fbf7e8"/><rect x="13" y="1" width="2" height="1" fill="#4b5076"/><rect x="15" y="1" width="1" height="1" fill="#000"/><rect x="0" y="2" width="1" height="1" fill="#4b5076"/><rect x="1" y="2" width="13" height="1" fill="#fbf7e8"/><rect x="14" y="2" width="1" height="1" fill="#4b5076"/><rect x="15" y="2" width="1" height="1" fill="#000"/><rect x="0" y="3" width="2" height="1" fill="#4b5076"/><rect x="2" y="3" width="2" height="1" fill="#fbf7e8"/><rect x="4" y="3" width="1" height="1" fill="#4b5076"/><rect x="5" y="3" width="9" height="1" fill="#fbf7e8"/><rect x="14" y="3" width="1" height="1" fill="#4b5076"/><rect x="15" y="3" width="1" height="1" fill="#000"/><rect x="0" y="4" width="1" height="1" fill="#4b5076"/><rect x="1" y="4" width="2" height="1" fill="#fbf7e8"/><rect x="3" y="4" width="3" height="1" fill="#4b5076"/><rect x="6" y="4" width="1" height="1" fill="#fbf7e8"/><rect x="7" y="4" width="1" height="1" fill="#000"/><rect x="8" y="4" width="2" height="1" fill="#fbf7e8"/><rect x="10" y="4" width="1" height="1" fill="#000"/><rect x="11" y="4" width="2" height="1" fill="#fbf7e8"/><rect x="13" y="4" width="1" height="1" fill="#000"/><rect x="14" y="4" width="1" height="1" fill="#4b5076"/><rect x="15" y="4" width="1" height="1" fill="#000"/><rect x="0" y="5" width="2" height="1" fill="#4b5076"/><rect x="2" y="5" width="2" height="1" fill="#fbf7e8"/><rect x="4" y="5" width="1" height="1" fill="#4b5076"/><rect x="5" y="5" width="3" height="1" fill="#fbf7e8"/><rect x="8" y="5" width="2" height="1" fill="#000"/><rect x="10" y="5" width="1" height="1" fill="#fff"/><rect x="11" y="5" width="2" height="1" fill="#000"/><rect x="13" y="5" width="1" height="1" fill="#fbf7e8"/><rect x="14" y="5" width="1" height="1" fill="#4b5076"/><rect x="15" y="5" width="1" height="1" fill="#000"/><rect x="0" y="6" width="1" height="1" fill="#4b5076"/><rect x="1" y="6" width="6" height="1" fill="#fbf7e8"/><rect x="7" y="6" width="1" height="1" fill="#000"/><rect x="8" y="6" width="5" height="1" fill="#fff"/><rect x="13" y="6" width="1" height="1" fill="#000"/><rect x="14" y="6" width="1" height="1" fill="#fbf7e8"/><rect x="15" y="6" width="2" height="1" fill="#000"/><rect x="0" y="7" width="2" height="1" fill="#4b5076"/><rect x="2" y="7" width="4" height="1" fill="#fbf7e8"/><rect x="6" y="7" width="2" height="1" fill="#000"/><rect x="8" y="7" width="1" height="1" fill="#fff"/><rect x="9" y="7" width="3" height="1" fill="#000"/><rect x="12" y="7" width="1" height="1" fill="#fff"/><rect x="13" y="7" width="4" height="1" fill="#000"/><rect x="0" y="8" width="1" height="1" fill="#4b5076"/><rect x="1" y="8" width="2" height="1" fill="#fbf7e8"/><rect x="3" y="8" width="4" height="1" fill="#000"/><rect x="7" y="8" width="2" height="1" fill="#fff"/><rect x="9" y="8" width="1" height="1" fill="#000"/><rect x="10" y="8" width="1" height="1" fill="#fff"/><rect x="11" y="8" width="1" height="1" fill="#000"/><rect x="12" y="8" width="2" height="1" fill="#fff"/><rect x="14" y="8" width="3" height="1" fill="#000"/><rect x="0" y="9" width="2" height="1" fill="#4b5076"/><rect x="2" y="9" width="4" height="1" fill="#fbf7e8"/><rect x="6" y="9" width="2" height="1" fill="#000"/><rect x="8" y="9" width="1" height="1" fill="#fff"/><rect x="9" y="9" width="1" height="1" fill="#000"/><rect x="10" y="9" width="1" height="1" fill="#fff"/><rect x="11" y="9" width="1" height="1" fill="#000"/><rect x="12" y="9" width="1" height="1" fill="#fff"/><rect x="13" y="9" width="4" height="1" fill="#000"/><rect x="0" y="10" width="1" height="1" fill="#4b5076"/><rect x="1" y="10" width="1" height="1" fill="#fbf7e8"/><rect x="2" y="10" width="1" height="1" fill="#4b5076"/><rect x="3" y="10" width="1" height="1" fill="#fbf7e8"/><rect x="4" y="10" width="1" height="1" fill="#4b5076"/><rect x="5" y="10" width="1" height="1" fill="#fbf7e8"/><rect x="6" y="10" width="2" height="1" fill="#000"/><rect x="8" y="10" width="1" height="1" fill="#fff"/><rect x="9" y="10" width="3" height="1" fill="#000"/><rect x="12" y="10" width="1" height="1" fill="#fff"/><rect x="13" y="10" width="4" height="1" fill="#000"/><rect x="0" y="11" width="6" height="1" fill="#4b5076"/><rect x="6" y="11" width="1" height="1" fill="#000"/><rect x="7" y="11" width="1" height="1" fill="#fff"/><rect x="8" y="11" width="1" height="1" fill="#000"/><rect x="9" y="11" width="3" height="1" fill="#fff"/><rect x="12" y="11" width="1" height="1" fill="#000"/><rect x="13" y="11" width="1" height="1" fill="#fff"/><rect x="14" y="11" width="3" height="1" fill="#000"/><rect x="1" y="12" width="15" height="1" fill="#000"/><rect x="6" y="13" width="2" height="1" fill="#000"/><rect x="8" y="13" width="1" height="1" fill="#fff"/><rect x="9" y="13" width="1" height="1" fill="#000"/><rect x="10" y="13" width="1" height="1" fill="#fff"/><rect x="11" y="13" width="1" height="1" fill="#000"/><rect x="12" y="13" width="1" height="1" fill="#fff"/><rect x="13" y="13" width="2" height="1" fill="#000"/><rect x="8" y="14" width="5" height="1" fill="#000"/><rect x="10" y="15" width="1" height="1" fill="#000"/></svg><span class="tx" style="left:20px;top:4px;transform:scaleX(0.9333);">Code Signing</span><span class="tx" style="left:210px;top:4px;transform:scaleX(0.9771);">Windows 2000 and later</span><span class="tx" style="left:360px;top:4px;transform:scaleX(1.0714);">1.1</span><span class="tx" style="left:410px;top:4px;transform:scaleX(0.9946);">Not allowed</span></div>
<div class="row" style="top:120px"><svg class="abs" style="left:2px;top:1px" width="17" height="16" viewBox="0 0 17 16" shape-rendering="crispEdges" ><rect x="0" y="0" width="15" height="1" fill="#4b5076"/><rect x="0" y="1" width="2" height="1" fill="#4b5076"/><rect x="2" y="1" width="1" height="1" fill="#fbf7e8"/><rect x="3" y="1" width="1" height="1" fill="#4b5076"/><rect x="4" y="1" width="1" height="1" fill="#fbf7e8"/><rect x="5" y="1" width="1" height="1" fill="#4b5076"/><rect x="6" y="1" width="1" height="1" fill="#fbf7e8"/><rect x="7" y="1" width="1" height="1" fill="#4b5076"/><rect x="8" y="1" width="1" height="1" fill="#fbf7e8"/><rect x="9" y="1" width="1" height="1" fill="#4b5076"/><rect x="10" y="1" width="1" height="1" fill="#fbf7e8"/><rect x="11" y="1" width="1" height="1" fill="#4b5076"/><rect x="12" y="1" width="1" height="1" fill="#fbf7e8"/><rect x="13" y="1" width="2" height="1" fill="#4b5076"/><rect x="15" y="1" width="1" height="1" fill="#000"/><rect x="0" y="2" width="1" height="1" fill="#4b5076"/><rect x="1" y="2" width="13" height="1" fill="#fbf7e8"/><rect x="14" y="2" width="1" height="1" fill="#4b5076"/><rect x="15" y="2" width="1" height="1" fill="#000"/><rect x="0" y="3" width="2" height="1" fill="#4b5076"/><rect x="2" y="3" width="2" height="1" fill="#fbf7e8"/><rect x="4" y="3" width="1" height="1" fill="#4b5076"/><rect x="5" y="3" width="9" height="1" fill="#fbf7e8"/><rect x="14" y="3" width="1" height="1" fill="#4b5076"/><rect x="15" y="3" width="1" height="1" fill="#000"/><rect x="0" y="4" width="1" height="1" fill="#4b5076"/><rect x="1" y="4" width="2" height="1" fill="#fbf7e8"/><rect x="3" y="4" width="3" height="1" fill="#4b5076"/><rect x="6" y="4" width="1" height="1" fill="#fbf7e8"/><rect x="7" y="4" width="1" height="1" fill="#000"/><rect x="8" y="4" width="2" height="1" fill="#fbf7e8"/><rect x="10" y="4" width="1" height="1" fill="#000"/><rect x="11" y="4" width="2" height="1" fill="#fbf7e8"/><rect x="13" y="4" width="1" height="1" fill="#000"/><rect x="14" y="4" width="1" height="1" fill="#4b5076"/><rect x="15" y="4" width="1" height="1" fill="#000"/><rect x="0" y="5" width="2" height="1" fill="#4b5076"/><rect x="2" y="5" width="2" height="1" fill="#fbf7e8"/><rect x="4" y="5" width="1" height="1" fill="#4b5076"/><rect x="5" y="5" width="3" height="1" fill="#fbf7e8"/><rect x="8" y="5" width="2" height="1" fill="#000"/><rect x="10" y="5" width="1" height="1" fill="#fff"/><rect x="11" y="5" width="2" height="1" fill="#000"/><rect x="13" y="5" width="1" height="1" fill="#fbf7e8"/><rect x="14" y="5" width="1" height="1" fill="#4b5076"/><rect x="15" y="5" width="1" height="1" fill="#000"/><rect x="0" y="6" width="1" height="1" fill="#4b5076"/><rect x="1" y="6" width="6" height="1" fill="#fbf7e8"/><rect x="7" y="6" width="1" height="1" fill="#000"/><rect x="8" y="6" width="5" height="1" fill="#fff"/><rect x="13" y="6" width="1" height="1" fill="#000"/><rect x="14" y="6" width="1" height="1" fill="#fbf7e8"/><rect x="15" y="6" width="2" height="1" fill="#000"/><rect x="0" y="7" width="2" height="1" fill="#4b5076"/><rect x="2" y="7" width="4" height="1" fill="#fbf7e8"/><rect x="6" y="7" width="2" height="1" fill="#000"/><rect x="8" y="7" width="1" height="1" fill="#fff"/><rect x="9" y="7" width="3" height="1" fill="#000"/><rect x="12" y="7" width="1" height="1" fill="#fff"/><rect x="13" y="7" width="4" height="1" fill="#000"/><rect x="0" y="8" width="1" height="1" fill="#4b5076"/><rect x="1" y="8" width="2" height="1" fill="#fbf7e8"/><rect x="3" y="8" width="4" height="1" fill="#000"/><rect x="7" y="8" width="2" height="1" fill="#fff"/><rect x="9" y="8" width="1" height="1" fill="#000"/><rect x="10" y="8" width="1" height="1" fill="#fff"/><rect x="11" y="8" width="1" height="1" fill="#000"/><rect x="12" y="8" width="2" height="1" fill="#fff"/><rect x="14" y="8" width="3" height="1" fill="#000"/><rect x="0" y="9" width="2" height="1" fill="#4b5076"/><rect x="2" y="9" width="4" height="1" fill="#fbf7e8"/><rect x="6" y="9" width="2" height="1" fill="#000"/><rect x="8" y="9" width="1" height="1" fill="#fff"/><rect x="9" y="9" width="1" height="1" fill="#000"/><rect x="10" y="9" width="1" height="1" fill="#fff"/><rect x="11" y="9" width="1" height="1" fill="#000"/><rect x="12" y="9" width="1" height="1" fill="#fff"/><rect x="13" y="9" width="4" height="1" fill="#000"/><rect x="0" y="10" width="1" height="1" fill="#4b5076"/><rect x="1" y="10" width="1" height="1" fill="#fbf7e8"/><rect x="2" y="10" width="1" height="1" fill="#4b5076"/><rect x="3" y="10" width="1" height="1" fill="#fbf7e8"/><rect x="4" y="10" width="1" height="1" fill="#4b5076"/><rect x="5" y="10" width="1" height="1" fill="#fbf7e8"/><rect x="6" y="10" width="2" height="1" fill="#000"/><rect x="8" y="10" width="1" height="1" fill="#fff"/><rect x="9" y="10" width="3" height="1" fill="#000"/><rect x="12" y="10" width="1" height="1" fill="#fff"/><rect x="13" y="10" width="4" height="1" fill="#000"/><rect x="0" y="11" width="6" height="1" fill="#4b5076"/><rect x="6" y="11" width="1" height="1" fill="#000"/><rect x="7" y="11" width="1" height="1" fill="#fff"/><rect x="8" y="11" width="1" height="1" fill="#000"/><rect x="9" y="11" width="3" height="1" fill="#fff"/><rect x="12" y="11" width="1" height="1" fill="#000"/><rect x="13" y="11" width="1" height="1" fill="#fff"/><rect x="14" y="11" width="3" height="1" fill="#000"/><rect x="1" y="12" width="15" height="1" fill="#000"/><rect x="6" y="13" width="2" height="1" fill="#000"/><rect x="8" y="13" width="1" height="1" fill="#fff"/><rect x="9" y="13" width="1" height="1" fill="#000"/><rect x="10" y="13" width="1" height="1" fill="#fff"/><rect x="11" y="13" width="1" height="1" fill="#000"/><rect x="12" y="13" width="1" height="1" fill="#fff"/><rect x="13" y="13" width="2" height="1" fill="#000"/><rect x="8" y="14" width="5" height="1" fill="#000"/><rect x="10" y="15" width="1" height="1" fill="#000"/></svg><span class="tx" style="left:20px;top:4px;transform:scaleX(0.9583);">Computer</span><span class="tx" style="left:210px;top:4px;transform:scaleX(0.9771);">Windows 2000 and later</span><span class="tx" style="left:361px;top:4px;transform:scaleX(1.0);">2.1</span><span class="tx" style="left:410px;top:4px;transform:scaleX(0.9946);">Not allowed</span></div>
<div class="row" style="top:137px"><svg class="abs" style="left:2px;top:1px" width="17" height="16" viewBox="0 0 17 16" shape-rendering="crispEdges" ><rect x="0" y="0" width="15" height="1" fill="#4b5076"/><rect x="0" y="1" width="2" height="1" fill="#4b5076"/><rect x="2" y="1" width="1" height="1" fill="#fbf7e8"/><rect x="3" y="1" width="1" height="1" fill="#4b5076"/><rect x="4" y="1" width="1" height="1" fill="#fbf7e8"/><rect x="5" y="1" width="1" height="1" fill="#4b5076"/><rect x="6" y="1" width="1" height="1" fill="#fbf7e8"/><rect x="7" y="1" width="1" height="1" fill="#4b5076"/><rect x="8" y="1" width="1" height="1" fill="#fbf7e8"/><rect x="9" y="1" width="1" height="1" fill="#4b5076"/><rect x="10" y="1" width="1" height="1" fill="#fbf7e8"/><rect x="11" y="1" width="1" height="1" fill="#4b5076"/><rect x="12" y="1" width="1" height="1" fill="#fbf7e8"/><rect x="13" y="1" width="2" height="1" fill="#4b5076"/><rect x="15" y="1" width="1" height="1" fill="#000"/><rect x="0" y="2" width="1" height="1" fill="#4b5076"/><rect x="1" y="2" width="13" height="1" fill="#fbf7e8"/><rect x="14" y="2" width="1" height="1" fill="#4b5076"/><rect x="15" y="2" width="1" height="1" fill="#000"/><rect x="0" y="3" width="2" height="1" fill="#4b5076"/><rect x="2" y="3" width="2" height="1" fill="#fbf7e8"/><rect x="4" y="3" width="1" height="1" fill="#4b5076"/><rect x="5" y="3" width="9" height="1" fill="#fbf7e8"/><rect x="14" y="3" width="1" height="1" fill="#4b5076"/><rect x="15" y="3" width="1" height="1" fill="#000"/><rect x="0" y="4" width="1" height="1" fill="#4b5076"/><rect x="1" y="4" width="2" height="1" fill="#fbf7e8"/><rect x="3" y="4" width="3" height="1" fill="#4b5076"/><rect x="6" y="4" width="1" height="1" fill="#fbf7e8"/><rect x="7" y="4" width="1" height="1" fill="#000"/><rect x="8" y="4" width="2" height="1" fill="#fbf7e8"/><rect x="10" y="4" width="1" height="1" fill="#000"/><rect x="11" y="4" width="2" height="1" fill="#fbf7e8"/><rect x="13" y="4" width="1" height="1" fill="#000"/><rect x="14" y="4" width="1" height="1" fill="#4b5076"/><rect x="15" y="4" width="1" height="1" fill="#000"/><rect x="0" y="5" width="2" height="1" fill="#4b5076"/><rect x="2" y="5" width="2" height="1" fill="#fbf7e8"/><rect x="4" y="5" width="1" height="1" fill="#4b5076"/><rect x="5" y="5" width="3" height="1" fill="#fbf7e8"/><rect x="8" y="5" width="2" height="1" fill="#000"/><rect x="10" y="5" width="1" height="1" fill="#fff"/><rect x="11" y="5" width="2" height="1" fill="#000"/><rect x="13" y="5" width="1" height="1" fill="#fbf7e8"/><rect x="14" y="5" width="1" height="1" fill="#4b5076"/><rect x="15" y="5" width="1" height="1" fill="#000"/><rect x="0" y="6" width="1" height="1" fill="#4b5076"/><rect x="1" y="6" width="6" height="1" fill="#fbf7e8"/><rect x="7" y="6" width="1" height="1" fill="#000"/><rect x="8" y="6" width="5" height="1" fill="#fff"/><rect x="13" y="6" width="1" height="1" fill="#000"/><rect x="14" y="6" width="1" height="1" fill="#fbf7e8"/><rect x="15" y="6" width="2" height="1" fill="#000"/><rect x="0" y="7" width="2" height="1" fill="#4b5076"/><rect x="2" y="7" width="4" height="1" fill="#fbf7e8"/><rect x="6" y="7" width="2" height="1" fill="#000"/><rect x="8" y="7" width="1" height="1" fill="#fff"/><rect x="9" y="7" width="3" height="1" fill="#000"/><rect x="12" y="7" width="1" height="1" fill="#fff"/><rect x="13" y="7" width="4" height="1" fill="#000"/><rect x="0" y="8" width="1" height="1" fill="#4b5076"/><rect x="1" y="8" width="2" height="1" fill="#fbf7e8"/><rect x="3" y="8" width="4" height="1" fill="#000"/><rect x="7" y="8" width="2" height="1" fill="#fff"/><rect x="9" y="8" width="1" height="1" fill="#000"/><rect x="10" y="8" width="1" height="1" fill="#fff"/><rect x="11" y="8" width="1" height="1" fill="#000"/><rect x="12" y="8" width="2" height="1" fill="#fff"/><rect x="14" y="8" width="3" height="1" fill="#000"/><rect x="0" y="9" width="2" height="1" fill="#4b5076"/><rect x="2" y="9" width="4" height="1" fill="#fbf7e8"/><rect x="6" y="9" width="2" height="1" fill="#000"/><rect x="8" y="9" width="1" height="1" fill="#fff"/><rect x="9" y="9" width="1" height="1" fill="#000"/><rect x="10" y="9" width="1" height="1" fill="#fff"/><rect x="11" y="9" width="1" height="1" fill="#000"/><rect x="12" y="9" width="1" height="1" fill="#fff"/><rect x="13" y="9" width="4" height="1" fill="#000"/><rect x="0" y="10" width="1" height="1" fill="#4b5076"/><rect x="1" y="10" width="1" height="1" fill="#fbf7e8"/><rect x="2" y="10" width="1" height="1" fill="#4b5076"/><rect x="3" y="10" width="1" height="1" fill="#fbf7e8"/><rect x="4" y="10" width="1" height="1" fill="#4b5076"/><rect x="5" y="10" width="1" height="1" fill="#fbf7e8"/><rect x="6" y="10" width="2" height="1" fill="#000"/><rect x="8" y="10" width="1" height="1" fill="#fff"/><rect x="9" y="10" width="3" height="1" fill="#000"/><rect x="12" y="10" width="1" height="1" fill="#fff"/><rect x="13" y="10" width="4" height="1" fill="#000"/><rect x="0" y="11" width="6" height="1" fill="#4b5076"/><rect x="6" y="11" width="1" height="1" fill="#000"/><rect x="7" y="11" width="1" height="1" fill="#fff"/><rect x="8" y="11" width="1" height="1" fill="#000"/><rect x="9" y="11" width="3" height="1" fill="#fff"/><rect x="12" y="11" width="1" height="1" fill="#000"/><rect x="13" y="11" width="1" height="1" fill="#fff"/><rect x="14" y="11" width="3" height="1" fill="#000"/><rect x="1" y="12" width="15" height="1" fill="#000"/><rect x="6" y="13" width="2" height="1" fill="#000"/><rect x="8" y="13" width="1" height="1" fill="#fff"/><rect x="9" y="13" width="1" height="1" fill="#000"/><rect x="10" y="13" width="1" height="1" fill="#fff"/><rect x="11" y="13" width="1" height="1" fill="#000"/><rect x="12" y="13" width="1" height="1" fill="#fff"/><rect x="13" y="13" width="2" height="1" fill="#000"/><rect x="8" y="14" width="5" height="1" fill="#000"/><rect x="10" y="15" width="1" height="1" fill="#000"/></svg><span class="tx" style="left:20px;top:4px;transform:scaleX(0.9941);">Cross Certification Authority</span><span class="tx" style="left:210px;top:4px;transform:scaleX(0.9976);">Whistler and later</span><span class="tx" style="left:360px;top:4px;transform:scaleX(1.0462);">103.0</span><span class="tx" style="left:410px;top:4px;transform:scaleX(0.9946);">Not allowed</span></div>
<div class="row" style="top:154px"><svg class="abs" style="left:2px;top:1px" width="17" height="16" viewBox="0 0 17 16" shape-rendering="crispEdges" ><rect x="0" y="0" width="15" height="1" fill="#4b5076"/><rect x="0" y="1" width="2" height="1" fill="#4b5076"/><rect x="2" y="1" width="1" height="1" fill="#fbf7e8"/><rect x="3" y="1" width="1" height="1" fill="#4b5076"/><rect x="4" y="1" width="1" height="1" fill="#fbf7e8"/><rect x="5" y="1" width="1" height="1" fill="#4b5076"/><rect x="6" y="1" width="1" height="1" fill="#fbf7e8"/><rect x="7" y="1" width="1" height="1" fill="#4b5076"/><rect x="8" y="1" width="1" height="1" fill="#fbf7e8"/><rect x="9" y="1" width="1" height="1" fill="#4b5076"/><rect x="10" y="1" width="1" height="1" fill="#fbf7e8"/><rect x="11" y="1" width="1" height="1" fill="#4b5076"/><rect x="12" y="1" width="1" height="1" fill="#fbf7e8"/><rect x="13" y="1" width="2" height="1" fill="#4b5076"/><rect x="15" y="1" width="1" height="1" fill="#000"/><rect x="0" y="2" width="1" height="1" fill="#4b5076"/><rect x="1" y="2" width="13" height="1" fill="#fbf7e8"/><rect x="14" y="2" width="1" height="1" fill="#4b5076"/><rect x="15" y="2" width="1" height="1" fill="#000"/><rect x="0" y="3" width="2" height="1" fill="#4b5076"/><rect x="2" y="3" width="2" height="1" fill="#fbf7e8"/><rect x="4" y="3" width="1" height="1" fill="#4b5076"/><rect x="5" y="3" width="9" height="1" fill="#fbf7e8"/><rect x="14" y="3" width="1" height="1" fill="#4b5076"/><rect x="15" y="3" width="1" height="1" fill="#000"/><rect x="0" y="4" width="1" height="1" fill="#4b5076"/><rect x="1" y="4" width="2" height="1" fill="#fbf7e8"/><rect x="3" y="4" width="3" height="1" fill="#4b5076"/><rect x="6" y="4" width="1" height="1" fill="#fbf7e8"/><rect x="7" y="4" width="1" height="1" fill="#000"/><rect x="8" y="4" width="2" height="1" fill="#fbf7e8"/><rect x="10" y="4" width="1" height="1" fill="#000"/><rect x="11" y="4" width="2" height="1" fill="#fbf7e8"/><rect x="13" y="4" width="1" height="1" fill="#000"/><rect x="14" y="4" width="1" height="1" fill="#4b5076"/><rect x="15" y="4" width="1" height="1" fill="#000"/><rect x="0" y="5" width="2" height="1" fill="#4b5076"/><rect x="2" y="5" width="2" height="1" fill="#fbf7e8"/><rect x="4" y="5" width="1" height="1" fill="#4b5076"/><rect x="5" y="5" width="3" height="1" fill="#fbf7e8"/><rect x="8" y="5" width="2" height="1" fill="#000"/><rect x="10" y="5" width="1" height="1" fill="#fff"/><rect x="11" y="5" width="2" height="1" fill="#000"/><rect x="13" y="5" width="1" height="1" fill="#fbf7e8"/><rect x="14" y="5" width="1" height="1" fill="#4b5076"/><rect x="15" y="5" width="1" height="1" fill="#000"/><rect x="0" y="6" width="1" height="1" fill="#4b5076"/><rect x="1" y="6" width="6" height="1" fill="#fbf7e8"/><rect x="7" y="6" width="1" height="1" fill="#000"/><rect x="8" y="6" width="5" height="1" fill="#fff"/><rect x="13" y="6" width="1" height="1" fill="#000"/><rect x="14" y="6" width="1" height="1" fill="#fbf7e8"/><rect x="15" y="6" width="2" height="1" fill="#000"/><rect x="0" y="7" width="2" height="1" fill="#4b5076"/><rect x="2" y="7" width="4" height="1" fill="#fbf7e8"/><rect x="6" y="7" width="2" height="1" fill="#000"/><rect x="8" y="7" width="1" height="1" fill="#fff"/><rect x="9" y="7" width="3" height="1" fill="#000"/><rect x="12" y="7" width="1" height="1" fill="#fff"/><rect x="13" y="7" width="4" height="1" fill="#000"/><rect x="0" y="8" width="1" height="1" fill="#4b5076"/><rect x="1" y="8" width="2" height="1" fill="#fbf7e8"/><rect x="3" y="8" width="4" height="1" fill="#000"/><rect x="7" y="8" width="2" height="1" fill="#fff"/><rect x="9" y="8" width="1" height="1" fill="#000"/><rect x="10" y="8" width="1" height="1" fill="#fff"/><rect x="11" y="8" width="1" height="1" fill="#000"/><rect x="12" y="8" width="2" height="1" fill="#fff"/><rect x="14" y="8" width="3" height="1" fill="#000"/><rect x="0" y="9" width="2" height="1" fill="#4b5076"/><rect x="2" y="9" width="4" height="1" fill="#fbf7e8"/><rect x="6" y="9" width="2" height="1" fill="#000"/><rect x="8" y="9" width="1" height="1" fill="#fff"/><rect x="9" y="9" width="1" height="1" fill="#000"/><rect x="10" y="9" width="1" height="1" fill="#fff"/><rect x="11" y="9" width="1" height="1" fill="#000"/><rect x="12" y="9" width="1" height="1" fill="#fff"/><rect x="13" y="9" width="4" height="1" fill="#000"/><rect x="0" y="10" width="1" height="1" fill="#4b5076"/><rect x="1" y="10" width="1" height="1" fill="#fbf7e8"/><rect x="2" y="10" width="1" height="1" fill="#4b5076"/><rect x="3" y="10" width="1" height="1" fill="#fbf7e8"/><rect x="4" y="10" width="1" height="1" fill="#4b5076"/><rect x="5" y="10" width="1" height="1" fill="#fbf7e8"/><rect x="6" y="10" width="2" height="1" fill="#000"/><rect x="8" y="10" width="1" height="1" fill="#fff"/><rect x="9" y="10" width="3" height="1" fill="#000"/><rect x="12" y="10" width="1" height="1" fill="#fff"/><rect x="13" y="10" width="4" height="1" fill="#000"/><rect x="0" y="11" width="6" height="1" fill="#4b5076"/><rect x="6" y="11" width="1" height="1" fill="#000"/><rect x="7" y="11" width="1" height="1" fill="#fff"/><rect x="8" y="11" width="1" height="1" fill="#000"/><rect x="9" y="11" width="3" height="1" fill="#fff"/><rect x="12" y="11" width="1" height="1" fill="#000"/><rect x="13" y="11" width="1" height="1" fill="#fff"/><rect x="14" y="11" width="3" height="1" fill="#000"/><rect x="1" y="12" width="15" height="1" fill="#000"/><rect x="6" y="13" width="2" height="1" fill="#000"/><rect x="8" y="13" width="1" height="1" fill="#fff"/><rect x="9" y="13" width="1" height="1" fill="#000"/><rect x="10" y="13" width="1" height="1" fill="#fff"/><rect x="11" y="13" width="1" height="1" fill="#000"/><rect x="12" y="13" width="1" height="1" fill="#fff"/><rect x="13" y="13" width="2" height="1" fill="#000"/><rect x="8" y="14" width="5" height="1" fill="#000"/><rect x="10" y="15" width="1" height="1" fill="#000"/></svg><span class="tx" style="left:19px;top:4px;transform:scaleX(0.958);">Directory Email Replication</span><span class="tx" style="left:210px;top:4px;transform:scaleX(0.9976);">Whistler and later</span><span class="tx" style="left:360px;top:4px;transform:scaleX(1.0462);">105.0</span><span class="tx" style="left:411px;top:4px;transform:scaleX(0.9737);">Allowed</span></div>
<div class="row" style="top:171px"><svg class="abs" style="left:2px;top:1px" width="17" height="16" viewBox="0 0 17 16" shape-rendering="crispEdges" ><rect x="0" y="0" width="15" height="1" fill="#4b5076"/><rect x="0" y="1" width="2" height="1" fill="#4b5076"/><rect x="2" y="1" width="1" height="1" fill="#fbf7e8"/><rect x="3" y="1" width="1" height="1" fill="#4b5076"/><rect x="4" y="1" width="1" height="1" fill="#fbf7e8"/><rect x="5" y="1" width="1" height="1" fill="#4b5076"/><rect x="6" y="1" width="1" height="1" fill="#fbf7e8"/><rect x="7" y="1" width="1" height="1" fill="#4b5076"/><rect x="8" y="1" width="1" height="1" fill="#fbf7e8"/><rect x="9" y="1" width="1" height="1" fill="#4b5076"/><rect x="10" y="1" width="1" height="1" fill="#fbf7e8"/><rect x="11" y="1" width="1" height="1" fill="#4b5076"/><rect x="12" y="1" width="1" height="1" fill="#fbf7e8"/><rect x="13" y="1" width="2" height="1" fill="#4b5076"/><rect x="15" y="1" width="1" height="1" fill="#000"/><rect x="0" y="2" width="1" height="1" fill="#4b5076"/><rect x="1" y="2" width="13" height="1" fill="#fbf7e8"/><rect x="14" y="2" width="1" height="1" fill="#4b5076"/><rect x="15" y="2" width="1" height="1" fill="#000"/><rect x="0" y="3" width="2" height="1" fill="#4b5076"/><rect x="2" y="3" width="2" height="1" fill="#fbf7e8"/><rect x="4" y="3" width="1" height="1" fill="#4b5076"/><rect x="5" y="3" width="9" height="1" fill="#fbf7e8"/><rect x="14" y="3" width="1" height="1" fill="#4b5076"/><rect x="15" y="3" width="1" height="1" fill="#000"/><rect x="0" y="4" width="1" height="1" fill="#4b5076"/><rect x="1" y="4" width="2" height="1" fill="#fbf7e8"/><rect x="3" y="4" width="3" height="1" fill="#4b5076"/><rect x="6" y="4" width="1" height="1" fill="#fbf7e8"/><rect x="7" y="4" width="1" height="1" fill="#000"/><rect x="8" y="4" width="2" height="1" fill="#fbf7e8"/><rect x="10" y="4" width="1" height="1" fill="#000"/><rect x="11" y="4" width="2" height="1" fill="#fbf7e8"/><rect x="13" y="4" width="1" height="1" fill="#000"/><rect x="14" y="4" width="1" height="1" fill="#4b5076"/><rect x="15" y="4" width="1" height="1" fill="#000"/><rect x="0" y="5" width="2" height="1" fill="#4b5076"/><rect x="2" y="5" width="2" height="1" fill="#fbf7e8"/><rect x="4" y="5" width="1" height="1" fill="#4b5076"/><rect x="5" y="5" width="3" height="1" fill="#fbf7e8"/><rect x="8" y="5" width="2" height="1" fill="#000"/><rect x="10" y="5" width="1" height="1" fill="#fff"/><rect x="11" y="5" width="2" height="1" fill="#000"/><rect x="13" y="5" width="1" height="1" fill="#fbf7e8"/><rect x="14" y="5" width="1" height="1" fill="#4b5076"/><rect x="15" y="5" width="1" height="1" fill="#000"/><rect x="0" y="6" width="1" height="1" fill="#4b5076"/><rect x="1" y="6" width="6" height="1" fill="#fbf7e8"/><rect x="7" y="6" width="1" height="1" fill="#000"/><rect x="8" y="6" width="5" height="1" fill="#fff"/><rect x="13" y="6" width="1" height="1" fill="#000"/><rect x="14" y="6" width="1" height="1" fill="#fbf7e8"/><rect x="15" y="6" width="2" height="1" fill="#000"/><rect x="0" y="7" width="2" height="1" fill="#4b5076"/><rect x="2" y="7" width="4" height="1" fill="#fbf7e8"/><rect x="6" y="7" width="2" height="1" fill="#000"/><rect x="8" y="7" width="1" height="1" fill="#fff"/><rect x="9" y="7" width="3" height="1" fill="#000"/><rect x="12" y="7" width="1" height="1" fill="#fff"/><rect x="13" y="7" width="4" height="1" fill="#000"/><rect x="0" y="8" width="1" height="1" fill="#4b5076"/><rect x="1" y="8" width="2" height="1" fill="#fbf7e8"/><rect x="3" y="8" width="4" height="1" fill="#000"/><rect x="7" y="8" width="2" height="1" fill="#fff"/><rect x="9" y="8" width="1" height="1" fill="#000"/><rect x="10" y="8" width="1" height="1" fill="#fff"/><rect x="11" y="8" width="1" height="1" fill="#000"/><rect x="12" y="8" width="2" height="1" fill="#fff"/><rect x="14" y="8" width="3" height="1" fill="#000"/><rect x="0" y="9" width="2" height="1" fill="#4b5076"/><rect x="2" y="9" width="4" height="1" fill="#fbf7e8"/><rect x="6" y="9" width="2" height="1" fill="#000"/><rect x="8" y="9" width="1" height="1" fill="#fff"/><rect x="9" y="9" width="1" height="1" fill="#000"/><rect x="10" y="9" width="1" height="1" fill="#fff"/><rect x="11" y="9" width="1" height="1" fill="#000"/><rect x="12" y="9" width="1" height="1" fill="#fff"/><rect x="13" y="9" width="4" height="1" fill="#000"/><rect x="0" y="10" width="1" height="1" fill="#4b5076"/><rect x="1" y="10" width="1" height="1" fill="#fbf7e8"/><rect x="2" y="10" width="1" height="1" fill="#4b5076"/><rect x="3" y="10" width="1" height="1" fill="#fbf7e8"/><rect x="4" y="10" width="1" height="1" fill="#4b5076"/><rect x="5" y="10" width="1" height="1" fill="#fbf7e8"/><rect x="6" y="10" width="2" height="1" fill="#000"/><rect x="8" y="10" width="1" height="1" fill="#fff"/><rect x="9" y="10" width="3" height="1" fill="#000"/><rect x="12" y="10" width="1" height="1" fill="#fff"/><rect x="13" y="10" width="4" height="1" fill="#000"/><rect x="0" y="11" width="6" height="1" fill="#4b5076"/><rect x="6" y="11" width="1" height="1" fill="#000"/><rect x="7" y="11" width="1" height="1" fill="#fff"/><rect x="8" y="11" width="1" height="1" fill="#000"/><rect x="9" y="11" width="3" height="1" fill="#fff"/><rect x="12" y="11" width="1" height="1" fill="#000"/><rect x="13" y="11" width="1" height="1" fill="#fff"/><rect x="14" y="11" width="3" height="1" fill="#000"/><rect x="1" y="12" width="15" height="1" fill="#000"/><rect x="6" y="13" width="2" height="1" fill="#000"/><rect x="8" y="13" width="1" height="1" fill="#fff"/><rect x="9" y="13" width="1" height="1" fill="#000"/><rect x="10" y="13" width="1" height="1" fill="#fff"/><rect x="11" y="13" width="1" height="1" fill="#000"/><rect x="12" y="13" width="1" height="1" fill="#fff"/><rect x="13" y="13" width="2" height="1" fill="#000"/><rect x="8" y="14" width="5" height="1" fill="#000"/><rect x="10" y="15" width="1" height="1" fill="#000"/></svg><span class="tx" style="left:19px;top:4px;transform:scaleX(0.969);">Domain Controller</span><span class="tx" style="left:210px;top:4px;transform:scaleX(0.9771);">Windows 2000 and later</span><span class="tx" style="left:360px;top:4px;transform:scaleX(1.0714);">1.1</span><span class="tx" style="left:410px;top:4px;transform:scaleX(0.9946);">Not allowed</span></div>
<div class="row" style="top:188px"><svg class="abs" style="left:2px;top:1px" width="17" height="16" viewBox="0 0 17 16" shape-rendering="crispEdges" ><rect x="0" y="0" width="15" height="1" fill="#4b5076"/><rect x="0" y="1" width="2" height="1" fill="#4b5076"/><rect x="2" y="1" width="1" height="1" fill="#fbf7e8"/><rect x="3" y="1" width="1" height="1" fill="#4b5076"/><rect x="4" y="1" width="1" height="1" fill="#fbf7e8"/><rect x="5" y="1" width="1" height="1" fill="#4b5076"/><rect x="6" y="1" width="1" height="1" fill="#fbf7e8"/><rect x="7" y="1" width="1" height="1" fill="#4b5076"/><rect x="8" y="1" width="1" height="1" fill="#fbf7e8"/><rect x="9" y="1" width="1" height="1" fill="#4b5076"/><rect x="10" y="1" width="1" height="1" fill="#fbf7e8"/><rect x="11" y="1" width="1" height="1" fill="#4b5076"/><rect x="12" y="1" width="1" height="1" fill="#fbf7e8"/><rect x="13" y="1" width="2" height="1" fill="#4b5076"/><rect x="15" y="1" width="1" height="1" fill="#000"/><rect x="0" y="2" width="1" height="1" fill="#4b5076"/><rect x="1" y="2" width="13" height="1" fill="#fbf7e8"/><rect x="14" y="2" width="1" height="1" fill="#4b5076"/><rect x="15" y="2" width="1" height="1" fill="#000"/><rect x="0" y="3" width="2" height="1" fill="#4b5076"/><rect x="2" y="3" width="2" height="1" fill="#fbf7e8"/><rect x="4" y="3" width="1" height="1" fill="#4b5076"/><rect x="5" y="3" width="9" height="1" fill="#fbf7e8"/><rect x="14" y="3" width="1" height="1" fill="#4b5076"/><rect x="15" y="3" width="1" height="1" fill="#000"/><rect x="0" y="4" width="1" height="1" fill="#4b5076"/><rect x="1" y="4" width="2" height="1" fill="#fbf7e8"/><rect x="3" y="4" width="3" height="1" fill="#4b5076"/><rect x="6" y="4" width="1" height="1" fill="#fbf7e8"/><rect x="7" y="4" width="1" height="1" fill="#000"/><rect x="8" y="4" width="2" height="1" fill="#fbf7e8"/><rect x="10" y="4" width="1" height="1" fill="#000"/><rect x="11" y="4" width="2" height="1" fill="#fbf7e8"/><rect x="13" y="4" width="1" height="1" fill="#000"/><rect x="14" y="4" width="1" height="1" fill="#4b5076"/><rect x="15" y="4" width="1" height="1" fill="#000"/><rect x="0" y="5" width="2" height="1" fill="#4b5076"/><rect x="2" y="5" width="2" height="1" fill="#fbf7e8"/><rect x="4" y="5" width="1" height="1" fill="#4b5076"/><rect x="5" y="5" width="3" height="1" fill="#fbf7e8"/><rect x="8" y="5" width="2" height="1" fill="#000"/><rect x="10" y="5" width="1" height="1" fill="#fff"/><rect x="11" y="5" width="2" height="1" fill="#000"/><rect x="13" y="5" width="1" height="1" fill="#fbf7e8"/><rect x="14" y="5" width="1" height="1" fill="#4b5076"/><rect x="15" y="5" width="1" height="1" fill="#000"/><rect x="0" y="6" width="1" height="1" fill="#4b5076"/><rect x="1" y="6" width="6" height="1" fill="#fbf7e8"/><rect x="7" y="6" width="1" height="1" fill="#000"/><rect x="8" y="6" width="5" height="1" fill="#fff"/><rect x="13" y="6" width="1" height="1" fill="#000"/><rect x="14" y="6" width="1" height="1" fill="#fbf7e8"/><rect x="15" y="6" width="2" height="1" fill="#000"/><rect x="0" y="7" width="2" height="1" fill="#4b5076"/><rect x="2" y="7" width="4" height="1" fill="#fbf7e8"/><rect x="6" y="7" width="2" height="1" fill="#000"/><rect x="8" y="7" width="1" height="1" fill="#fff"/><rect x="9" y="7" width="3" height="1" fill="#000"/><rect x="12" y="7" width="1" height="1" fill="#fff"/><rect x="13" y="7" width="4" height="1" fill="#000"/><rect x="0" y="8" width="1" height="1" fill="#4b5076"/><rect x="1" y="8" width="2" height="1" fill="#fbf7e8"/><rect x="3" y="8" width="4" height="1" fill="#000"/><rect x="7" y="8" width="2" height="1" fill="#fff"/><rect x="9" y="8" width="1" height="1" fill="#000"/><rect x="10" y="8" width="1" height="1" fill="#fff"/><rect x="11" y="8" width="1" height="1" fill="#000"/><rect x="12" y="8" width="2" height="1" fill="#fff"/><rect x="14" y="8" width="3" height="1" fill="#000"/><rect x="0" y="9" width="2" height="1" fill="#4b5076"/><rect x="2" y="9" width="4" height="1" fill="#fbf7e8"/><rect x="6" y="9" width="2" height="1" fill="#000"/><rect x="8" y="9" width="1" height="1" fill="#fff"/><rect x="9" y="9" width="1" height="1" fill="#000"/><rect x="10" y="9" width="1" height="1" fill="#fff"/><rect x="11" y="9" width="1" height="1" fill="#000"/><rect x="12" y="9" width="1" height="1" fill="#fff"/><rect x="13" y="9" width="4" height="1" fill="#000"/><rect x="0" y="10" width="1" height="1" fill="#4b5076"/><rect x="1" y="10" width="1" height="1" fill="#fbf7e8"/><rect x="2" y="10" width="1" height="1" fill="#4b5076"/><rect x="3" y="10" width="1" height="1" fill="#fbf7e8"/><rect x="4" y="10" width="1" height="1" fill="#4b5076"/><rect x="5" y="10" width="1" height="1" fill="#fbf7e8"/><rect x="6" y="10" width="2" height="1" fill="#000"/><rect x="8" y="10" width="1" height="1" fill="#fff"/><rect x="9" y="10" width="3" height="1" fill="#000"/><rect x="12" y="10" width="1" height="1" fill="#fff"/><rect x="13" y="10" width="4" height="1" fill="#000"/><rect x="0" y="11" width="6" height="1" fill="#4b5076"/><rect x="6" y="11" width="1" height="1" fill="#000"/><rect x="7" y="11" width="1" height="1" fill="#fff"/><rect x="8" y="11" width="1" height="1" fill="#000"/><rect x="9" y="11" width="3" height="1" fill="#fff"/><rect x="12" y="11" width="1" height="1" fill="#000"/><rect x="13" y="11" width="1" height="1" fill="#fff"/><rect x="14" y="11" width="3" height="1" fill="#000"/><rect x="1" y="12" width="15" height="1" fill="#000"/><rect x="6" y="13" width="2" height="1" fill="#000"/><rect x="8" y="13" width="1" height="1" fill="#fff"/><rect x="9" y="13" width="1" height="1" fill="#000"/><rect x="10" y="13" width="1" height="1" fill="#fff"/><rect x="11" y="13" width="1" height="1" fill="#000"/><rect x="12" y="13" width="1" height="1" fill="#fff"/><rect x="13" y="13" width="2" height="1" fill="#000"/><rect x="8" y="14" width="5" height="1" fill="#000"/><rect x="10" y="15" width="1" height="1" fill="#000"/></svg><span class="tx" style="left:19px;top:4px;transform:scaleX(0.9906);">Domain Controller Authentication</span><span class="tx" style="left:210px;top:4px;transform:scaleX(0.9976);">Whistler and later</span><span class="tx" style="left:360px;top:4px;transform:scaleX(1.0462);">104.0</span><span class="tx" style="left:411px;top:4px;transform:scaleX(0.9737);">Allowed</span></div>
<div class="row" style="top:205px"><svg class="abs" style="left:2px;top:1px" width="17" height="16" viewBox="0 0 17 16" shape-rendering="crispEdges" ><rect x="0" y="0" width="15" height="1" fill="#4b5076"/><rect x="0" y="1" width="2" height="1" fill="#4b5076"/><rect x="2" y="1" width="1" height="1" fill="#fbf7e8"/><rect x="3" y="1" width="1" height="1" fill="#4b5076"/><rect x="4" y="1" width="1" height="1" fill="#fbf7e8"/><rect x="5" y="1" width="1" height="1" fill="#4b5076"/><rect x="6" y="1" width="1" height="1" fill="#fbf7e8"/><rect x="7" y="1" width="1" height="1" fill="#4b5076"/><rect x="8" y="1" width="1" height="1" fill="#fbf7e8"/><rect x="9" y="1" width="1" height="1" fill="#4b5076"/><rect x="10" y="1" width="1" height="1" fill="#fbf7e8"/><rect x="11" y="1" width="1" height="1" fill="#4b5076"/><rect x="12" y="1" width="1" height="1" fill="#fbf7e8"/><rect x="13" y="1" width="2" height="1" fill="#4b5076"/><rect x="15" y="1" width="1" height="1" fill="#000"/><rect x="0" y="2" width="1" height="1" fill="#4b5076"/><rect x="1" y="2" width="13" height="1" fill="#fbf7e8"/><rect x="14" y="2" width="1" height="1" fill="#4b5076"/><rect x="15" y="2" width="1" height="1" fill="#000"/><rect x="0" y="3" width="2" height="1" fill="#4b5076"/><rect x="2" y="3" width="2" height="1" fill="#fbf7e8"/><rect x="4" y="3" width="1" height="1" fill="#4b5076"/><rect x="5" y="3" width="9" height="1" fill="#fbf7e8"/><rect x="14" y="3" width="1" height="1" fill="#4b5076"/><rect x="15" y="3" width="1" height="1" fill="#000"/><rect x="0" y="4" width="1" height="1" fill="#4b5076"/><rect x="1" y="4" width="2" height="1" fill="#fbf7e8"/><rect x="3" y="4" width="3" height="1" fill="#4b5076"/><rect x="6" y="4" width="1" height="1" fill="#fbf7e8"/><rect x="7" y="4" width="1" height="1" fill="#000"/><rect x="8" y="4" width="2" height="1" fill="#fbf7e8"/><rect x="10" y="4" width="1" height="1" fill="#000"/><rect x="11" y="4" width="2" height="1" fill="#fbf7e8"/><rect x="13" y="4" width="1" height="1" fill="#000"/><rect x="14" y="4" width="1" height="1" fill="#4b5076"/><rect x="15" y="4" width="1" height="1" fill="#000"/><rect x="0" y="5" width="2" height="1" fill="#4b5076"/><rect x="2" y="5" width="2" height="1" fill="#fbf7e8"/><rect x="4" y="5" width="1" height="1" fill="#4b5076"/><rect x="5" y="5" width="3" height="1" fill="#fbf7e8"/><rect x="8" y="5" width="2" height="1" fill="#000"/><rect x="10" y="5" width="1" height="1" fill="#fff"/><rect x="11" y="5" width="2" height="1" fill="#000"/><rect x="13" y="5" width="1" height="1" fill="#fbf7e8"/><rect x="14" y="5" width="1" height="1" fill="#4b5076"/><rect x="15" y="5" width="1" height="1" fill="#000"/><rect x="0" y="6" width="1" height="1" fill="#4b5076"/><rect x="1" y="6" width="6" height="1" fill="#fbf7e8"/><rect x="7" y="6" width="1" height="1" fill="#000"/><rect x="8" y="6" width="5" height="1" fill="#fff"/><rect x="13" y="6" width="1" height="1" fill="#000"/><rect x="14" y="6" width="1" height="1" fill="#fbf7e8"/><rect x="15" y="6" width="2" height="1" fill="#000"/><rect x="0" y="7" width="2" height="1" fill="#4b5076"/><rect x="2" y="7" width="4" height="1" fill="#fbf7e8"/><rect x="6" y="7" width="2" height="1" fill="#000"/><rect x="8" y="7" width="1" height="1" fill="#fff"/><rect x="9" y="7" width="3" height="1" fill="#000"/><rect x="12" y="7" width="1" height="1" fill="#fff"/><rect x="13" y="7" width="4" height="1" fill="#000"/><rect x="0" y="8" width="1" height="1" fill="#4b5076"/><rect x="1" y="8" width="2" height="1" fill="#fbf7e8"/><rect x="3" y="8" width="4" height="1" fill="#000"/><rect x="7" y="8" width="2" height="1" fill="#fff"/><rect x="9" y="8" width="1" height="1" fill="#000"/><rect x="10" y="8" width="1" height="1" fill="#fff"/><rect x="11" y="8" width="1" height="1" fill="#000"/><rect x="12" y="8" width="2" height="1" fill="#fff"/><rect x="14" y="8" width="3" height="1" fill="#000"/><rect x="0" y="9" width="2" height="1" fill="#4b5076"/><rect x="2" y="9" width="4" height="1" fill="#fbf7e8"/><rect x="6" y="9" width="2" height="1" fill="#000"/><rect x="8" y="9" width="1" height="1" fill="#fff"/><rect x="9" y="9" width="1" height="1" fill="#000"/><rect x="10" y="9" width="1" height="1" fill="#fff"/><rect x="11" y="9" width="1" height="1" fill="#000"/><rect x="12" y="9" width="1" height="1" fill="#fff"/><rect x="13" y="9" width="4" height="1" fill="#000"/><rect x="0" y="10" width="1" height="1" fill="#4b5076"/><rect x="1" y="10" width="1" height="1" fill="#fbf7e8"/><rect x="2" y="10" width="1" height="1" fill="#4b5076"/><rect x="3" y="10" width="1" height="1" fill="#fbf7e8"/><rect x="4" y="10" width="1" height="1" fill="#4b5076"/><rect x="5" y="10" width="1" height="1" fill="#fbf7e8"/><rect x="6" y="10" width="2" height="1" fill="#000"/><rect x="8" y="10" width="1" height="1" fill="#fff"/><rect x="9" y="10" width="3" height="1" fill="#000"/><rect x="12" y="10" width="1" height="1" fill="#fff"/><rect x="13" y="10" width="4" height="1" fill="#000"/><rect x="0" y="11" width="6" height="1" fill="#4b5076"/><rect x="6" y="11" width="1" height="1" fill="#000"/><rect x="7" y="11" width="1" height="1" fill="#fff"/><rect x="8" y="11" width="1" height="1" fill="#000"/><rect x="9" y="11" width="3" height="1" fill="#fff"/><rect x="12" y="11" width="1" height="1" fill="#000"/><rect x="13" y="11" width="1" height="1" fill="#fff"/><rect x="14" y="11" width="3" height="1" fill="#000"/><rect x="1" y="12" width="15" height="1" fill="#000"/><rect x="6" y="13" width="2" height="1" fill="#000"/><rect x="8" y="13" width="1" height="1" fill="#fff"/><rect x="9" y="13" width="1" height="1" fill="#000"/><rect x="10" y="13" width="1" height="1" fill="#fff"/><rect x="11" y="13" width="1" height="1" fill="#000"/><rect x="12" y="13" width="1" height="1" fill="#fff"/><rect x="13" y="13" width="2" height="1" fill="#000"/><rect x="8" y="14" width="5" height="1" fill="#000"/><rect x="10" y="15" width="1" height="1" fill="#000"/></svg><span class="tx" style="left:19px;top:4px;transform:scaleX(0.9723);">EFS Recovery Agent</span><span class="tx" style="left:210px;top:4px;transform:scaleX(0.9771);">Windows 2000 and later</span><span class="tx" style="left:361px;top:4px;transform:scaleX(1.0);">4.1</span><span class="tx" style="left:410px;top:4px;transform:scaleX(0.9946);">Not allowed</span></div>
<div class="row" style="top:222px"><svg class="abs" style="left:2px;top:1px" width="17" height="16" viewBox="0 0 17 16" shape-rendering="crispEdges" ><rect x="0" y="0" width="15" height="1" fill="#4b5076"/><rect x="0" y="1" width="2" height="1" fill="#4b5076"/><rect x="2" y="1" width="1" height="1" fill="#fbf7e8"/><rect x="3" y="1" width="1" height="1" fill="#4b5076"/><rect x="4" y="1" width="1" height="1" fill="#fbf7e8"/><rect x="5" y="1" width="1" height="1" fill="#4b5076"/><rect x="6" y="1" width="1" height="1" fill="#fbf7e8"/><rect x="7" y="1" width="1" height="1" fill="#4b5076"/><rect x="8" y="1" width="1" height="1" fill="#fbf7e8"/><rect x="9" y="1" width="1" height="1" fill="#4b5076"/><rect x="10" y="1" width="1" height="1" fill="#fbf7e8"/><rect x="11" y="1" width="1" height="1" fill="#4b5076"/><rect x="12" y="1" width="1" height="1" fill="#fbf7e8"/><rect x="13" y="1" width="2" height="1" fill="#4b5076"/><rect x="15" y="1" width="1" height="1" fill="#000"/><rect x="0" y="2" width="1" height="1" fill="#4b5076"/><rect x="1" y="2" width="13" height="1" fill="#fbf7e8"/><rect x="14" y="2" width="1" height="1" fill="#4b5076"/><rect x="15" y="2" width="1" height="1" fill="#000"/><rect x="0" y="3" width="2" height="1" fill="#4b5076"/><rect x="2" y="3" width="2" height="1" fill="#fbf7e8"/><rect x="4" y="3" width="1" height="1" fill="#4b5076"/><rect x="5" y="3" width="9" height="1" fill="#fbf7e8"/><rect x="14" y="3" width="1" height="1" fill="#4b5076"/><rect x="15" y="3" width="1" height="1" fill="#000"/><rect x="0" y="4" width="1" height="1" fill="#4b5076"/><rect x="1" y="4" width="2" height="1" fill="#fbf7e8"/><rect x="3" y="4" width="3" height="1" fill="#4b5076"/><rect x="6" y="4" width="1" height="1" fill="#fbf7e8"/><rect x="7" y="4" width="1" height="1" fill="#000"/><rect x="8" y="4" width="2" height="1" fill="#fbf7e8"/><rect x="10" y="4" width="1" height="1" fill="#000"/><rect x="11" y="4" width="2" height="1" fill="#fbf7e8"/><rect x="13" y="4" width="1" height="1" fill="#000"/><rect x="14" y="4" width="1" height="1" fill="#4b5076"/><rect x="15" y="4" width="1" height="1" fill="#000"/><rect x="0" y="5" width="2" height="1" fill="#4b5076"/><rect x="2" y="5" width="2" height="1" fill="#fbf7e8"/><rect x="4" y="5" width="1" height="1" fill="#4b5076"/><rect x="5" y="5" width="3" height="1" fill="#fbf7e8"/><rect x="8" y="5" width="2" height="1" fill="#000"/><rect x="10" y="5" width="1" height="1" fill="#fff"/><rect x="11" y="5" width="2" height="1" fill="#000"/><rect x="13" y="5" width="1" height="1" fill="#fbf7e8"/><rect x="14" y="5" width="1" height="1" fill="#4b5076"/><rect x="15" y="5" width="1" height="1" fill="#000"/><rect x="0" y="6" width="1" height="1" fill="#4b5076"/><rect x="1" y="6" width="6" height="1" fill="#fbf7e8"/><rect x="7" y="6" width="1" height="1" fill="#000"/><rect x="8" y="6" width="5" height="1" fill="#fff"/><rect x="13" y="6" width="1" height="1" fill="#000"/><rect x="14" y="6" width="1" height="1" fill="#fbf7e8"/><rect x="15" y="6" width="2" height="1" fill="#000"/><rect x="0" y="7" width="2" height="1" fill="#4b5076"/><rect x="2" y="7" width="4" height="1" fill="#fbf7e8"/><rect x="6" y="7" width="2" height="1" fill="#000"/><rect x="8" y="7" width="1" height="1" fill="#fff"/><rect x="9" y="7" width="3" height="1" fill="#000"/><rect x="12" y="7" width="1" height="1" fill="#fff"/><rect x="13" y="7" width="4" height="1" fill="#000"/><rect x="0" y="8" width="1" height="1" fill="#4b5076"/><rect x="1" y="8" width="2" height="1" fill="#fbf7e8"/><rect x="3" y="8" width="4" height="1" fill="#000"/><rect x="7" y="8" width="2" height="1" fill="#fff"/><rect x="9" y="8" width="1" height="1" fill="#000"/><rect x="10" y="8" width="1" height="1" fill="#fff"/><rect x="11" y="8" width="1" height="1" fill="#000"/><rect x="12" y="8" width="2" height="1" fill="#fff"/><rect x="14" y="8" width="3" height="1" fill="#000"/><rect x="0" y="9" width="2" height="1" fill="#4b5076"/><rect x="2" y="9" width="4" height="1" fill="#fbf7e8"/><rect x="6" y="9" width="2" height="1" fill="#000"/><rect x="8" y="9" width="1" height="1" fill="#fff"/><rect x="9" y="9" width="1" height="1" fill="#000"/><rect x="10" y="9" width="1" height="1" fill="#fff"/><rect x="11" y="9" width="1" height="1" fill="#000"/><rect x="12" y="9" width="1" height="1" fill="#fff"/><rect x="13" y="9" width="4" height="1" fill="#000"/><rect x="0" y="10" width="1" height="1" fill="#4b5076"/><rect x="1" y="10" width="1" height="1" fill="#fbf7e8"/><rect x="2" y="10" width="1" height="1" fill="#4b5076"/><rect x="3" y="10" width="1" height="1" fill="#fbf7e8"/><rect x="4" y="10" width="1" height="1" fill="#4b5076"/><rect x="5" y="10" width="1" height="1" fill="#fbf7e8"/><rect x="6" y="10" width="2" height="1" fill="#000"/><rect x="8" y="10" width="1" height="1" fill="#fff"/><rect x="9" y="10" width="3" height="1" fill="#000"/><rect x="12" y="10" width="1" height="1" fill="#fff"/><rect x="13" y="10" width="4" height="1" fill="#000"/><rect x="0" y="11" width="6" height="1" fill="#4b5076"/><rect x="6" y="11" width="1" height="1" fill="#000"/><rect x="7" y="11" width="1" height="1" fill="#fff"/><rect x="8" y="11" width="1" height="1" fill="#000"/><rect x="9" y="11" width="3" height="1" fill="#fff"/><rect x="12" y="11" width="1" height="1" fill="#000"/><rect x="13" y="11" width="1" height="1" fill="#fff"/><rect x="14" y="11" width="3" height="1" fill="#000"/><rect x="1" y="12" width="15" height="1" fill="#000"/><rect x="6" y="13" width="2" height="1" fill="#000"/><rect x="8" y="13" width="1" height="1" fill="#fff"/><rect x="9" y="13" width="1" height="1" fill="#000"/><rect x="10" y="13" width="1" height="1" fill="#fff"/><rect x="11" y="13" width="1" height="1" fill="#000"/><rect x="12" y="13" width="1" height="1" fill="#fff"/><rect x="13" y="13" width="2" height="1" fill="#000"/><rect x="8" y="14" width="5" height="1" fill="#000"/><rect x="10" y="15" width="1" height="1" fill="#000"/></svg><span class="tx" style="left:19px;top:4px;transform:scaleX(0.9759);">Enrollment Agent</span><span class="tx" style="left:210px;top:4px;transform:scaleX(0.9771);">Windows 2000 and later</span><span class="tx" style="left:361px;top:4px;transform:scaleX(1.0);">2.1</span><span class="tx" style="left:410px;top:4px;transform:scaleX(0.9946);">Not allowed</span></div>
<div class="row" style="top:239px"><svg class="abs" style="left:2px;top:1px" width="17" height="16" viewBox="0 0 17 16" shape-rendering="crispEdges" ><rect x="0" y="0" width="15" height="1" fill="#4b5076"/><rect x="0" y="1" width="2" height="1" fill="#4b5076"/><rect x="2" y="1" width="1" height="1" fill="#fbf7e8"/><rect x="3" y="1" width="1" height="1" fill="#4b5076"/><rect x="4" y="1" width="1" height="1" fill="#fbf7e8"/><rect x="5" y="1" width="1" height="1" fill="#4b5076"/><rect x="6" y="1" width="1" height="1" fill="#fbf7e8"/><rect x="7" y="1" width="1" height="1" fill="#4b5076"/><rect x="8" y="1" width="1" height="1" fill="#fbf7e8"/><rect x="9" y="1" width="1" height="1" fill="#4b5076"/><rect x="10" y="1" width="1" height="1" fill="#fbf7e8"/><rect x="11" y="1" width="1" height="1" fill="#4b5076"/><rect x="12" y="1" width="1" height="1" fill="#fbf7e8"/><rect x="13" y="1" width="2" height="1" fill="#4b5076"/><rect x="15" y="1" width="1" height="1" fill="#000"/><rect x="0" y="2" width="1" height="1" fill="#4b5076"/><rect x="1" y="2" width="13" height="1" fill="#fbf7e8"/><rect x="14" y="2" width="1" height="1" fill="#4b5076"/><rect x="15" y="2" width="1" height="1" fill="#000"/><rect x="0" y="3" width="2" height="1" fill="#4b5076"/><rect x="2" y="3" width="2" height="1" fill="#fbf7e8"/><rect x="4" y="3" width="1" height="1" fill="#4b5076"/><rect x="5" y="3" width="9" height="1" fill="#fbf7e8"/><rect x="14" y="3" width="1" height="1" fill="#4b5076"/><rect x="15" y="3" width="1" height="1" fill="#000"/><rect x="0" y="4" width="1" height="1" fill="#4b5076"/><rect x="1" y="4" width="2" height="1" fill="#fbf7e8"/><rect x="3" y="4" width="3" height="1" fill="#4b5076"/><rect x="6" y="4" width="1" height="1" fill="#fbf7e8"/><rect x="7" y="4" width="1" height="1" fill="#000"/><rect x="8" y="4" width="2" height="1" fill="#fbf7e8"/><rect x="10" y="4" width="1" height="1" fill="#000"/><rect x="11" y="4" width="2" height="1" fill="#fbf7e8"/><rect x="13" y="4" width="1" height="1" fill="#000"/><rect x="14" y="4" width="1" height="1" fill="#4b5076"/><rect x="15" y="4" width="1" height="1" fill="#000"/><rect x="0" y="5" width="2" height="1" fill="#4b5076"/><rect x="2" y="5" width="2" height="1" fill="#fbf7e8"/><rect x="4" y="5" width="1" height="1" fill="#4b5076"/><rect x="5" y="5" width="3" height="1" fill="#fbf7e8"/><rect x="8" y="5" width="2" height="1" fill="#000"/><rect x="10" y="5" width="1" height="1" fill="#fff"/><rect x="11" y="5" width="2" height="1" fill="#000"/><rect x="13" y="5" width="1" height="1" fill="#fbf7e8"/><rect x="14" y="5" width="1" height="1" fill="#4b5076"/><rect x="15" y="5" width="1" height="1" fill="#000"/><rect x="0" y="6" width="1" height="1" fill="#4b5076"/><rect x="1" y="6" width="6" height="1" fill="#fbf7e8"/><rect x="7" y="6" width="1" height="1" fill="#000"/><rect x="8" y="6" width="5" height="1" fill="#fff"/><rect x="13" y="6" width="1" height="1" fill="#000"/><rect x="14" y="6" width="1" height="1" fill="#fbf7e8"/><rect x="15" y="6" width="2" height="1" fill="#000"/><rect x="0" y="7" width="2" height="1" fill="#4b5076"/><rect x="2" y="7" width="4" height="1" fill="#fbf7e8"/><rect x="6" y="7" width="2" height="1" fill="#000"/><rect x="8" y="7" width="1" height="1" fill="#fff"/><rect x="9" y="7" width="3" height="1" fill="#000"/><rect x="12" y="7" width="1" height="1" fill="#fff"/><rect x="13" y="7" width="4" height="1" fill="#000"/><rect x="0" y="8" width="1" height="1" fill="#4b5076"/><rect x="1" y="8" width="2" height="1" fill="#fbf7e8"/><rect x="3" y="8" width="4" height="1" fill="#000"/><rect x="7" y="8" width="2" height="1" fill="#fff"/><rect x="9" y="8" width="1" height="1" fill="#000"/><rect x="10" y="8" width="1" height="1" fill="#fff"/><rect x="11" y="8" width="1" height="1" fill="#000"/><rect x="12" y="8" width="2" height="1" fill="#fff"/><rect x="14" y="8" width="3" height="1" fill="#000"/><rect x="0" y="9" width="2" height="1" fill="#4b5076"/><rect x="2" y="9" width="4" height="1" fill="#fbf7e8"/><rect x="6" y="9" width="2" height="1" fill="#000"/><rect x="8" y="9" width="1" height="1" fill="#fff"/><rect x="9" y="9" width="1" height="1" fill="#000"/><rect x="10" y="9" width="1" height="1" fill="#fff"/><rect x="11" y="9" width="1" height="1" fill="#000"/><rect x="12" y="9" width="1" height="1" fill="#fff"/><rect x="13" y="9" width="4" height="1" fill="#000"/><rect x="0" y="10" width="1" height="1" fill="#4b5076"/><rect x="1" y="10" width="1" height="1" fill="#fbf7e8"/><rect x="2" y="10" width="1" height="1" fill="#4b5076"/><rect x="3" y="10" width="1" height="1" fill="#fbf7e8"/><rect x="4" y="10" width="1" height="1" fill="#4b5076"/><rect x="5" y="10" width="1" height="1" fill="#fbf7e8"/><rect x="6" y="10" width="2" height="1" fill="#000"/><rect x="8" y="10" width="1" height="1" fill="#fff"/><rect x="9" y="10" width="3" height="1" fill="#000"/><rect x="12" y="10" width="1" height="1" fill="#fff"/><rect x="13" y="10" width="4" height="1" fill="#000"/><rect x="0" y="11" width="6" height="1" fill="#4b5076"/><rect x="6" y="11" width="1" height="1" fill="#000"/><rect x="7" y="11" width="1" height="1" fill="#fff"/><rect x="8" y="11" width="1" height="1" fill="#000"/><rect x="9" y="11" width="3" height="1" fill="#fff"/><rect x="12" y="11" width="1" height="1" fill="#000"/><rect x="13" y="11" width="1" height="1" fill="#fff"/><rect x="14" y="11" width="3" height="1" fill="#000"/><rect x="1" y="12" width="15" height="1" fill="#000"/><rect x="6" y="13" width="2" height="1" fill="#000"/><rect x="8" y="13" width="1" height="1" fill="#fff"/><rect x="9" y="13" width="1" height="1" fill="#000"/><rect x="10" y="13" width="1" height="1" fill="#fff"/><rect x="11" y="13" width="1" height="1" fill="#000"/><rect x="12" y="13" width="1" height="1" fill="#fff"/><rect x="13" y="13" width="2" height="1" fill="#000"/><rect x="8" y="14" width="5" height="1" fill="#000"/><rect x="10" y="15" width="1" height="1" fill="#000"/></svg><span class="tx" style="left:19px;top:4px;transform:scaleX(0.9908);">Enrollment Agent (Computer)</span><span class="tx" style="left:210px;top:4px;transform:scaleX(0.9771);">Windows 2000 and later</span><span class="tx" style="left:361px;top:4px;transform:scaleX(1.0);">2.1</span><span class="tx" style="left:410px;top:4px;transform:scaleX(0.9946);">Not allowed</span></div>
<div class="row" style="top:256px"><svg class="abs" style="left:2px;top:1px" width="17" height="16" viewBox="0 0 17 16" shape-rendering="crispEdges" ><rect x="0" y="0" width="15" height="1" fill="#4b5076"/><rect x="0" y="1" width="2" height="1" fill="#4b5076"/><rect x="2" y="1" width="1" height="1" fill="#fbf7e8"/><rect x="3" y="1" width="1" height="1" fill="#4b5076"/><rect x="4" y="1" width="1" height="1" fill="#fbf7e8"/><rect x="5" y="1" width="1" height="1" fill="#4b5076"/><rect x="6" y="1" width="1" height="1" fill="#fbf7e8"/><rect x="7" y="1" width="1" height="1" fill="#4b5076"/><rect x="8" y="1" width="1" height="1" fill="#fbf7e8"/><rect x="9" y="1" width="1" height="1" fill="#4b5076"/><rect x="10" y="1" width="1" height="1" fill="#fbf7e8"/><rect x="11" y="1" width="1" height="1" fill="#4b5076"/><rect x="12" y="1" width="1" height="1" fill="#fbf7e8"/><rect x="13" y="1" width="2" height="1" fill="#4b5076"/><rect x="15" y="1" width="1" height="1" fill="#000"/><rect x="0" y="2" width="1" height="1" fill="#4b5076"/><rect x="1" y="2" width="13" height="1" fill="#fbf7e8"/><rect x="14" y="2" width="1" height="1" fill="#4b5076"/><rect x="15" y="2" width="1" height="1" fill="#000"/><rect x="0" y="3" width="2" height="1" fill="#4b5076"/><rect x="2" y="3" width="2" height="1" fill="#fbf7e8"/><rect x="4" y="3" width="1" height="1" fill="#4b5076"/><rect x="5" y="3" width="9" height="1" fill="#fbf7e8"/><rect x="14" y="3" width="1" height="1" fill="#4b5076"/><rect x="15" y="3" width="1" height="1" fill="#000"/><rect x="0" y="4" width="1" height="1" fill="#4b5076"/><rect x="1" y="4" width="2" height="1" fill="#fbf7e8"/><rect x="3" y="4" width="3" height="1" fill="#4b5076"/><rect x="6" y="4" width="1" height="1" fill="#fbf7e8"/><rect x="7" y="4" width="1" height="1" fill="#000"/><rect x="8" y="4" width="2" height="1" fill="#fbf7e8"/><rect x="10" y="4" width="1" height="1" fill="#000"/><rect x="11" y="4" width="2" height="1" fill="#fbf7e8"/><rect x="13" y="4" width="1" height="1" fill="#000"/><rect x="14" y="4" width="1" height="1" fill="#4b5076"/><rect x="15" y="4" width="1" height="1" fill="#000"/><rect x="0" y="5" width="2" height="1" fill="#4b5076"/><rect x="2" y="5" width="2" height="1" fill="#fbf7e8"/><rect x="4" y="5" width="1" height="1" fill="#4b5076"/><rect x="5" y="5" width="3" height="1" fill="#fbf7e8"/><rect x="8" y="5" width="2" height="1" fill="#000"/><rect x="10" y="5" width="1" height="1" fill="#fff"/><rect x="11" y="5" width="2" height="1" fill="#000"/><rect x="13" y="5" width="1" height="1" fill="#fbf7e8"/><rect x="14" y="5" width="1" height="1" fill="#4b5076"/><rect x="15" y="5" width="1" height="1" fill="#000"/><rect x="0" y="6" width="1" height="1" fill="#4b5076"/><rect x="1" y="6" width="6" height="1" fill="#fbf7e8"/><rect x="7" y="6" width="1" height="1" fill="#000"/><rect x="8" y="6" width="5" height="1" fill="#fff"/><rect x="13" y="6" width="1" height="1" fill="#000"/><rect x="14" y="6" width="1" height="1" fill="#fbf7e8"/><rect x="15" y="6" width="2" height="1" fill="#000"/><rect x="0" y="7" width="2" height="1" fill="#4b5076"/><rect x="2" y="7" width="4" height="1" fill="#fbf7e8"/><rect x="6" y="7" width="2" height="1" fill="#000"/><rect x="8" y="7" width="1" height="1" fill="#fff"/><rect x="9" y="7" width="3" height="1" fill="#000"/><rect x="12" y="7" width="1" height="1" fill="#fff"/><rect x="13" y="7" width="4" height="1" fill="#000"/><rect x="0" y="8" width="1" height="1" fill="#4b5076"/><rect x="1" y="8" width="2" height="1" fill="#fbf7e8"/><rect x="3" y="8" width="4" height="1" fill="#000"/><rect x="7" y="8" width="2" height="1" fill="#fff"/><rect x="9" y="8" width="1" height="1" fill="#000"/><rect x="10" y="8" width="1" height="1" fill="#fff"/><rect x="11" y="8" width="1" height="1" fill="#000"/><rect x="12" y="8" width="2" height="1" fill="#fff"/><rect x="14" y="8" width="3" height="1" fill="#000"/><rect x="0" y="9" width="2" height="1" fill="#4b5076"/><rect x="2" y="9" width="4" height="1" fill="#fbf7e8"/><rect x="6" y="9" width="2" height="1" fill="#000"/><rect x="8" y="9" width="1" height="1" fill="#fff"/><rect x="9" y="9" width="1" height="1" fill="#000"/><rect x="10" y="9" width="1" height="1" fill="#fff"/><rect x="11" y="9" width="1" height="1" fill="#000"/><rect x="12" y="9" width="1" height="1" fill="#fff"/><rect x="13" y="9" width="4" height="1" fill="#000"/><rect x="0" y="10" width="1" height="1" fill="#4b5076"/><rect x="1" y="10" width="1" height="1" fill="#fbf7e8"/><rect x="2" y="10" width="1" height="1" fill="#4b5076"/><rect x="3" y="10" width="1" height="1" fill="#fbf7e8"/><rect x="4" y="10" width="1" height="1" fill="#4b5076"/><rect x="5" y="10" width="1" height="1" fill="#fbf7e8"/><rect x="6" y="10" width="2" height="1" fill="#000"/><rect x="8" y="10" width="1" height="1" fill="#fff"/><rect x="9" y="10" width="3" height="1" fill="#000"/><rect x="12" y="10" width="1" height="1" fill="#fff"/><rect x="13" y="10" width="4" height="1" fill="#000"/><rect x="0" y="11" width="6" height="1" fill="#4b5076"/><rect x="6" y="11" width="1" height="1" fill="#000"/><rect x="7" y="11" width="1" height="1" fill="#fff"/><rect x="8" y="11" width="1" height="1" fill="#000"/><rect x="9" y="11" width="3" height="1" fill="#fff"/><rect x="12" y="11" width="1" height="1" fill="#000"/><rect x="13" y="11" width="1" height="1" fill="#fff"/><rect x="14" y="11" width="3" height="1" fill="#000"/><rect x="1" y="12" width="15" height="1" fill="#000"/><rect x="6" y="13" width="2" height="1" fill="#000"/><rect x="8" y="13" width="1" height="1" fill="#fff"/><rect x="9" y="13" width="1" height="1" fill="#000"/><rect x="10" y="13" width="1" height="1" fill="#fff"/><rect x="11" y="13" width="1" height="1" fill="#000"/><rect x="12" y="13" width="1" height="1" fill="#fff"/><rect x="13" y="13" width="2" height="1" fill="#000"/><rect x="8" y="14" width="5" height="1" fill="#000"/><rect x="10" y="15" width="1" height="1" fill="#000"/></svg><span class="tx" style="left:19px;top:4px;transform:scaleX(1.0044);">Exchange Enrollment Agent (Offline...</span><span class="tx" style="left:210px;top:4px;transform:scaleX(0.9771);">Windows 2000 and later</span><span class="tx" style="left:361px;top:4px;transform:scaleX(1.0);">2.1</span><span class="tx" style="left:410px;top:4px;transform:scaleX(0.9946);">Not allowed</span></div>
<div class="row" style="top:273px"><svg class="abs" style="left:2px;top:1px" width="17" height="16" viewBox="0 0 17 16" shape-rendering="crispEdges" ><rect x="0" y="0" width="15" height="1" fill="#4b5076"/><rect x="0" y="1" width="2" height="1" fill="#4b5076"/><rect x="2" y="1" width="1" height="1" fill="#fbf7e8"/><rect x="3" y="1" width="1" height="1" fill="#4b5076"/><rect x="4" y="1" width="1" height="1" fill="#fbf7e8"/><rect x="5" y="1" width="1" height="1" fill="#4b5076"/><rect x="6" y="1" width="1" height="1" fill="#fbf7e8"/><rect x="7" y="1" width="1" height="1" fill="#4b5076"/><rect x="8" y="1" width="1" height="1" fill="#fbf7e8"/><rect x="9" y="1" width="1" height="1" fill="#4b5076"/><rect x="10" y="1" width="1" height="1" fill="#fbf7e8"/><rect x="11" y="1" width="1" height="1" fill="#4b5076"/><rect x="12" y="1" width="1" height="1" fill="#fbf7e8"/><rect x="13" y="1" width="2" height="1" fill="#4b5076"/><rect x="15" y="1" width="1" height="1" fill="#000"/><rect x="0" y="2" width="1" height="1" fill="#4b5076"/><rect x="1" y="2" width="13" height="1" fill="#fbf7e8"/><rect x="14" y="2" width="1" height="1" fill="#4b5076"/><rect x="15" y="2" width="1" height="1" fill="#000"/><rect x="0" y="3" width="2" height="1" fill="#4b5076"/><rect x="2" y="3" width="2" height="1" fill="#fbf7e8"/><rect x="4" y="3" width="1" height="1" fill="#4b5076"/><rect x="5" y="3" width="9" height="1" fill="#fbf7e8"/><rect x="14" y="3" width="1" height="1" fill="#4b5076"/><rect x="15" y="3" width="1" height="1" fill="#000"/><rect x="0" y="4" width="1" height="1" fill="#4b5076"/><rect x="1" y="4" width="2" height="1" fill="#fbf7e8"/><rect x="3" y="4" width="3" height="1" fill="#4b5076"/><rect x="6" y="4" width="1" height="1" fill="#fbf7e8"/><rect x="7" y="4" width="1" height="1" fill="#000"/><rect x="8" y="4" width="2" height="1" fill="#fbf7e8"/><rect x="10" y="4" width="1" height="1" fill="#000"/><rect x="11" y="4" width="2" height="1" fill="#fbf7e8"/><rect x="13" y="4" width="1" height="1" fill="#000"/><rect x="14" y="4" width="1" height="1" fill="#4b5076"/><rect x="15" y="4" width="1" height="1" fill="#000"/><rect x="0" y="5" width="2" height="1" fill="#4b5076"/><rect x="2" y="5" width="2" height="1" fill="#fbf7e8"/><rect x="4" y="5" width="1" height="1" fill="#4b5076"/><rect x="5" y="5" width="3" height="1" fill="#fbf7e8"/><rect x="8" y="5" width="2" height="1" fill="#000"/><rect x="10" y="5" width="1" height="1" fill="#fff"/><rect x="11" y="5" width="2" height="1" fill="#000"/><rect x="13" y="5" width="1" height="1" fill="#fbf7e8"/><rect x="14" y="5" width="1" height="1" fill="#4b5076"/><rect x="15" y="5" width="1" height="1" fill="#000"/><rect x="0" y="6" width="1" height="1" fill="#4b5076"/><rect x="1" y="6" width="6" height="1" fill="#fbf7e8"/><rect x="7" y="6" width="1" height="1" fill="#000"/><rect x="8" y="6" width="5" height="1" fill="#fff"/><rect x="13" y="6" width="1" height="1" fill="#000"/><rect x="14" y="6" width="1" height="1" fill="#fbf7e8"/><rect x="15" y="6" width="2" height="1" fill="#000"/><rect x="0" y="7" width="2" height="1" fill="#4b5076"/><rect x="2" y="7" width="4" height="1" fill="#fbf7e8"/><rect x="6" y="7" width="2" height="1" fill="#000"/><rect x="8" y="7" width="1" height="1" fill="#fff"/><rect x="9" y="7" width="3" height="1" fill="#000"/><rect x="12" y="7" width="1" height="1" fill="#fff"/><rect x="13" y="7" width="4" height="1" fill="#000"/><rect x="0" y="8" width="1" height="1" fill="#4b5076"/><rect x="1" y="8" width="2" height="1" fill="#fbf7e8"/><rect x="3" y="8" width="4" height="1" fill="#000"/><rect x="7" y="8" width="2" height="1" fill="#fff"/><rect x="9" y="8" width="1" height="1" fill="#000"/><rect x="10" y="8" width="1" height="1" fill="#fff"/><rect x="11" y="8" width="1" height="1" fill="#000"/><rect x="12" y="8" width="2" height="1" fill="#fff"/><rect x="14" y="8" width="3" height="1" fill="#000"/><rect x="0" y="9" width="2" height="1" fill="#4b5076"/><rect x="2" y="9" width="4" height="1" fill="#fbf7e8"/><rect x="6" y="9" width="2" height="1" fill="#000"/><rect x="8" y="9" width="1" height="1" fill="#fff"/><rect x="9" y="9" width="1" height="1" fill="#000"/><rect x="10" y="9" width="1" height="1" fill="#fff"/><rect x="11" y="9" width="1" height="1" fill="#000"/><rect x="12" y="9" width="1" height="1" fill="#fff"/><rect x="13" y="9" width="4" height="1" fill="#000"/><rect x="0" y="10" width="1" height="1" fill="#4b5076"/><rect x="1" y="10" width="1" height="1" fill="#fbf7e8"/><rect x="2" y="10" width="1" height="1" fill="#4b5076"/><rect x="3" y="10" width="1" height="1" fill="#fbf7e8"/><rect x="4" y="10" width="1" height="1" fill="#4b5076"/><rect x="5" y="10" width="1" height="1" fill="#fbf7e8"/><rect x="6" y="10" width="2" height="1" fill="#000"/><rect x="8" y="10" width="1" height="1" fill="#fff"/><rect x="9" y="10" width="3" height="1" fill="#000"/><rect x="12" y="10" width="1" height="1" fill="#fff"/><rect x="13" y="10" width="4" height="1" fill="#000"/><rect x="0" y="11" width="6" height="1" fill="#4b5076"/><rect x="6" y="11" width="1" height="1" fill="#000"/><rect x="7" y="11" width="1" height="1" fill="#fff"/><rect x="8" y="11" width="1" height="1" fill="#000"/><rect x="9" y="11" width="3" height="1" fill="#fff"/><rect x="12" y="11" width="1" height="1" fill="#000"/><rect x="13" y="11" width="1" height="1" fill="#fff"/><rect x="14" y="11" width="3" height="1" fill="#000"/><rect x="1" y="12" width="15" height="1" fill="#000"/><rect x="6" y="13" width="2" height="1" fill="#000"/><rect x="8" y="13" width="1" height="1" fill="#fff"/><rect x="9" y="13" width="1" height="1" fill="#000"/><rect x="10" y="13" width="1" height="1" fill="#fff"/><rect x="11" y="13" width="1" height="1" fill="#000"/><rect x="12" y="13" width="1" height="1" fill="#fff"/><rect x="13" y="13" width="2" height="1" fill="#000"/><rect x="8" y="14" width="5" height="1" fill="#000"/><rect x="10" y="15" width="1" height="1" fill="#000"/></svg><span class="tx" style="left:19px;top:4px;transform:scaleX(0.9718);">Exchange Signature Only</span><span class="tx" style="left:210px;top:4px;transform:scaleX(0.9771);">Windows 2000 and later</span><span class="tx" style="left:360px;top:4px;transform:scaleX(1.0714);">1.1</span><span class="tx" style="left:410px;top:4px;transform:scaleX(0.9946);">Not allowed</span></div>
<div class="row" style="top:290px"><svg class="abs" style="left:2px;top:1px" width="17" height="16" viewBox="0 0 17 16" shape-rendering="crispEdges" ><rect x="0" y="0" width="15" height="1" fill="#4b5076"/><rect x="0" y="1" width="2" height="1" fill="#4b5076"/><rect x="2" y="1" width="1" height="1" fill="#fbf7e8"/><rect x="3" y="1" width="1" height="1" fill="#4b5076"/><rect x="4" y="1" width="1" height="1" fill="#fbf7e8"/><rect x="5" y="1" width="1" height="1" fill="#4b5076"/><rect x="6" y="1" width="1" height="1" fill="#fbf7e8"/><rect x="7" y="1" width="1" height="1" fill="#4b5076"/><rect x="8" y="1" width="1" height="1" fill="#fbf7e8"/><rect x="9" y="1" width="1" height="1" fill="#4b5076"/><rect x="10" y="1" width="1" height="1" fill="#fbf7e8"/><rect x="11" y="1" width="1" height="1" fill="#4b5076"/><rect x="12" y="1" width="1" height="1" fill="#fbf7e8"/><rect x="13" y="1" width="2" height="1" fill="#4b5076"/><rect x="15" y="1" width="1" height="1" fill="#000"/><rect x="0" y="2" width="1" height="1" fill="#4b5076"/><rect x="1" y="2" width="13" height="1" fill="#fbf7e8"/><rect x="14" y="2" width="1" height="1" fill="#4b5076"/><rect x="15" y="2" width="1" height="1" fill="#000"/><rect x="0" y="3" width="2" height="1" fill="#4b5076"/><rect x="2" y="3" width="2" height="1" fill="#fbf7e8"/><rect x="4" y="3" width="1" height="1" fill="#4b5076"/><rect x="5" y="3" width="9" height="1" fill="#fbf7e8"/><rect x="14" y="3" width="1" height="1" fill="#4b5076"/><rect x="15" y="3" width="1" height="1" fill="#000"/><rect x="0" y="4" width="1" height="1" fill="#4b5076"/><rect x="1" y="4" width="2" height="1" fill="#fbf7e8"/><rect x="3" y="4" width="3" height="1" fill="#4b5076"/><rect x="6" y="4" width="1" height="1" fill="#fbf7e8"/><rect x="7" y="4" width="1" height="1" fill="#000"/><rect x="8" y="4" width="2" height="1" fill="#fbf7e8"/><rect x="10" y="4" width="1" height="1" fill="#000"/><rect x="11" y="4" width="2" height="1" fill="#fbf7e8"/><rect x="13" y="4" width="1" height="1" fill="#000"/><rect x="14" y="4" width="1" height="1" fill="#4b5076"/><rect x="15" y="4" width="1" height="1" fill="#000"/><rect x="0" y="5" width="2" height="1" fill="#4b5076"/><rect x="2" y="5" width="2" height="1" fill="#fbf7e8"/><rect x="4" y="5" width="1" height="1" fill="#4b5076"/><rect x="5" y="5" width="3" height="1" fill="#fbf7e8"/><rect x="8" y="5" width="2" height="1" fill="#000"/><rect x="10" y="5" width="1" height="1" fill="#fff"/><rect x="11" y="5" width="2" height="1" fill="#000"/><rect x="13" y="5" width="1" height="1" fill="#fbf7e8"/><rect x="14" y="5" width="1" height="1" fill="#4b5076"/><rect x="15" y="5" width="1" height="1" fill="#000"/><rect x="0" y="6" width="1" height="1" fill="#4b5076"/><rect x="1" y="6" width="6" height="1" fill="#fbf7e8"/><rect x="7" y="6" width="1" height="1" fill="#000"/><rect x="8" y="6" width="5" height="1" fill="#fff"/><rect x="13" y="6" width="1" height="1" fill="#000"/><rect x="14" y="6" width="1" height="1" fill="#fbf7e8"/><rect x="15" y="6" width="2" height="1" fill="#000"/><rect x="0" y="7" width="2" height="1" fill="#4b5076"/><rect x="2" y="7" width="4" height="1" fill="#fbf7e8"/><rect x="6" y="7" width="2" height="1" fill="#000"/><rect x="8" y="7" width="1" height="1" fill="#fff"/><rect x="9" y="7" width="3" height="1" fill="#000"/><rect x="12" y="7" width="1" height="1" fill="#fff"/><rect x="13" y="7" width="4" height="1" fill="#000"/><rect x="0" y="8" width="1" height="1" fill="#4b5076"/><rect x="1" y="8" width="2" height="1" fill="#fbf7e8"/><rect x="3" y="8" width="4" height="1" fill="#000"/><rect x="7" y="8" width="2" height="1" fill="#fff"/><rect x="9" y="8" width="1" height="1" fill="#000"/><rect x="10" y="8" width="1" height="1" fill="#fff"/><rect x="11" y="8" width="1" height="1" fill="#000"/><rect x="12" y="8" width="2" height="1" fill="#fff"/><rect x="14" y="8" width="3" height="1" fill="#000"/><rect x="0" y="9" width="2" height="1" fill="#4b5076"/><rect x="2" y="9" width="4" height="1" fill="#fbf7e8"/><rect x="6" y="9" width="2" height="1" fill="#000"/><rect x="8" y="9" width="1" height="1" fill="#fff"/><rect x="9" y="9" width="1" height="1" fill="#000"/><rect x="10" y="9" width="1" height="1" fill="#fff"/><rect x="11" y="9" width="1" height="1" fill="#000"/><rect x="12" y="9" width="1" height="1" fill="#fff"/><rect x="13" y="9" width="4" height="1" fill="#000"/><rect x="0" y="10" width="1" height="1" fill="#4b5076"/><rect x="1" y="10" width="1" height="1" fill="#fbf7e8"/><rect x="2" y="10" width="1" height="1" fill="#4b5076"/><rect x="3" y="10" width="1" height="1" fill="#fbf7e8"/><rect x="4" y="10" width="1" height="1" fill="#4b5076"/><rect x="5" y="10" width="1" height="1" fill="#fbf7e8"/><rect x="6" y="10" width="2" height="1" fill="#000"/><rect x="8" y="10" width="1" height="1" fill="#fff"/><rect x="9" y="10" width="3" height="1" fill="#000"/><rect x="12" y="10" width="1" height="1" fill="#fff"/><rect x="13" y="10" width="4" height="1" fill="#000"/><rect x="0" y="11" width="6" height="1" fill="#4b5076"/><rect x="6" y="11" width="1" height="1" fill="#000"/><rect x="7" y="11" width="1" height="1" fill="#fff"/><rect x="8" y="11" width="1" height="1" fill="#000"/><rect x="9" y="11" width="3" height="1" fill="#fff"/><rect x="12" y="11" width="1" height="1" fill="#000"/><rect x="13" y="11" width="1" height="1" fill="#fff"/><rect x="14" y="11" width="3" height="1" fill="#000"/><rect x="1" y="12" width="15" height="1" fill="#000"/><rect x="6" y="13" width="2" height="1" fill="#000"/><rect x="8" y="13" width="1" height="1" fill="#fff"/><rect x="9" y="13" width="1" height="1" fill="#000"/><rect x="10" y="13" width="1" height="1" fill="#fff"/><rect x="11" y="13" width="1" height="1" fill="#000"/><rect x="12" y="13" width="1" height="1" fill="#fff"/><rect x="13" y="13" width="2" height="1" fill="#000"/><rect x="8" y="14" width="5" height="1" fill="#000"/><rect x="10" y="15" width="1" height="1" fill="#000"/></svg><span class="tx" style="left:19px;top:4px;transform:scaleX(0.9649);">Exchange User</span><span class="tx" style="left:210px;top:4px;transform:scaleX(0.9771);">Windows 2000 and later</span><span class="tx" style="left:361px;top:4px;transform:scaleX(1.0);">2.1</span><span class="tx" style="left:410px;top:4px;transform:scaleX(0.9946);">Not allowed</span></div>
<div class="row" style="top:307px"><svg class="abs" style="left:2px;top:1px" width="17" height="16" viewBox="0 0 17 16" shape-rendering="crispEdges" ><rect x="0" y="0" width="15" height="1" fill="#4b5076"/><rect x="0" y="1" width="2" height="1" fill="#4b5076"/><rect x="2" y="1" width="1" height="1" fill="#fbf7e8"/><rect x="3" y="1" width="1" height="1" fill="#4b5076"/><rect x="4" y="1" width="1" height="1" fill="#fbf7e8"/><rect x="5" y="1" width="1" height="1" fill="#4b5076"/><rect x="6" y="1" width="1" height="1" fill="#fbf7e8"/><rect x="7" y="1" width="1" height="1" fill="#4b5076"/><rect x="8" y="1" width="1" height="1" fill="#fbf7e8"/><rect x="9" y="1" width="1" height="1" fill="#4b5076"/><rect x="10" y="1" width="1" height="1" fill="#fbf7e8"/><rect x="11" y="1" width="1" height="1" fill="#4b5076"/><rect x="12" y="1" width="1" height="1" fill="#fbf7e8"/><rect x="13" y="1" width="2" height="1" fill="#4b5076"/><rect x="15" y="1" width="1" height="1" fill="#000"/><rect x="0" y="2" width="1" height="1" fill="#4b5076"/><rect x="1" y="2" width="13" height="1" fill="#fbf7e8"/><rect x="14" y="2" width="1" height="1" fill="#4b5076"/><rect x="15" y="2" width="1" height="1" fill="#000"/><rect x="0" y="3" width="2" height="1" fill="#4b5076"/><rect x="2" y="3" width="2" height="1" fill="#fbf7e8"/><rect x="4" y="3" width="1" height="1" fill="#4b5076"/><rect x="5" y="3" width="9" height="1" fill="#fbf7e8"/><rect x="14" y="3" width="1" height="1" fill="#4b5076"/><rect x="15" y="3" width="1" height="1" fill="#000"/><rect x="0" y="4" width="1" height="1" fill="#4b5076"/><rect x="1" y="4" width="2" height="1" fill="#fbf7e8"/><rect x="3" y="4" width="3" height="1" fill="#4b5076"/><rect x="6" y="4" width="1" height="1" fill="#fbf7e8"/><rect x="7" y="4" width="1" height="1" fill="#000"/><rect x="8" y="4" width="2" height="1" fill="#fbf7e8"/><rect x="10" y="4" width="1" height="1" fill="#000"/><rect x="11" y="4" width="2" height="1" fill="#fbf7e8"/><rect x="13" y="4" width="1" height="1" fill="#000"/><rect x="14" y="4" width="1" height="1" fill="#4b5076"/><rect x="15" y="4" width="1" height="1" fill="#000"/><rect x="0" y="5" width="2" height="1" fill="#4b5076"/><rect x="2" y="5" width="2" height="1" fill="#fbf7e8"/><rect x="4" y="5" width="1" height="1" fill="#4b5076"/><rect x="5" y="5" width="3" height="1" fill="#fbf7e8"/><rect x="8" y="5" width="2" height="1" fill="#000"/><rect x="10" y="5" width="1" height="1" fill="#fff"/><rect x="11" y="5" width="2" height="1" fill="#000"/><rect x="13" y="5" width="1" height="1" fill="#fbf7e8"/><rect x="14" y="5" width="1" height="1" fill="#4b5076"/><rect x="15" y="5" width="1" height="1" fill="#000"/><rect x="0" y="6" width="1" height="1" fill="#4b5076"/><rect x="1" y="6" width="6" height="1" fill="#fbf7e8"/><rect x="7" y="6" width="1" height="1" fill="#000"/><rect x="8" y="6" width="5" height="1" fill="#fff"/><rect x="13" y="6" width="1" height="1" fill="#000"/><rect x="14" y="6" width="1" height="1" fill="#fbf7e8"/><rect x="15" y="6" width="2" height="1" fill="#000"/><rect x="0" y="7" width="2" height="1" fill="#4b5076"/><rect x="2" y="7" width="4" height="1" fill="#fbf7e8"/><rect x="6" y="7" width="2" height="1" fill="#000"/><rect x="8" y="7" width="1" height="1" fill="#fff"/><rect x="9" y="7" width="3" height="1" fill="#000"/><rect x="12" y="7" width="1" height="1" fill="#fff"/><rect x="13" y="7" width="4" height="1" fill="#000"/><rect x="0" y="8" width="1" height="1" fill="#4b5076"/><rect x="1" y="8" width="2" height="1" fill="#fbf7e8"/><rect x="3" y="8" width="4" height="1" fill="#000"/><rect x="7" y="8" width="2" height="1" fill="#fff"/><rect x="9" y="8" width="1" height="1" fill="#000"/><rect x="10" y="8" width="1" height="1" fill="#fff"/><rect x="11" y="8" width="1" height="1" fill="#000"/><rect x="12" y="8" width="2" height="1" fill="#fff"/><rect x="14" y="8" width="3" height="1" fill="#000"/><rect x="0" y="9" width="2" height="1" fill="#4b5076"/><rect x="2" y="9" width="4" height="1" fill="#fbf7e8"/><rect x="6" y="9" width="2" height="1" fill="#000"/><rect x="8" y="9" width="1" height="1" fill="#fff"/><rect x="9" y="9" width="1" height="1" fill="#000"/><rect x="10" y="9" width="1" height="1" fill="#fff"/><rect x="11" y="9" width="1" height="1" fill="#000"/><rect x="12" y="9" width="1" height="1" fill="#fff"/><rect x="13" y="9" width="4" height="1" fill="#000"/><rect x="0" y="10" width="1" height="1" fill="#4b5076"/><rect x="1" y="10" width="1" height="1" fill="#fbf7e8"/><rect x="2" y="10" width="1" height="1" fill="#4b5076"/><rect x="3" y="10" width="1" height="1" fill="#fbf7e8"/><rect x="4" y="10" width="1" height="1" fill="#4b5076"/><rect x="5" y="10" width="1" height="1" fill="#fbf7e8"/><rect x="6" y="10" width="2" height="1" fill="#000"/><rect x="8" y="10" width="1" height="1" fill="#fff"/><rect x="9" y="10" width="3" height="1" fill="#000"/><rect x="12" y="10" width="1" height="1" fill="#fff"/><rect x="13" y="10" width="4" height="1" fill="#000"/><rect x="0" y="11" width="6" height="1" fill="#4b5076"/><rect x="6" y="11" width="1" height="1" fill="#000"/><rect x="7" y="11" width="1" height="1" fill="#fff"/><rect x="8" y="11" width="1" height="1" fill="#000"/><rect x="9" y="11" width="3" height="1" fill="#fff"/><rect x="12" y="11" width="1" height="1" fill="#000"/><rect x="13" y="11" width="1" height="1" fill="#fff"/><rect x="14" y="11" width="3" height="1" fill="#000"/><rect x="1" y="12" width="15" height="1" fill="#000"/><rect x="6" y="13" width="2" height="1" fill="#000"/><rect x="8" y="13" width="1" height="1" fill="#fff"/><rect x="9" y="13" width="1" height="1" fill="#000"/><rect x="10" y="13" width="1" height="1" fill="#fff"/><rect x="11" y="13" width="1" height="1" fill="#000"/><rect x="12" y="13" width="1" height="1" fill="#fff"/><rect x="13" y="13" width="2" height="1" fill="#000"/><rect x="8" y="14" width="5" height="1" fill="#000"/><rect x="10" y="15" width="1" height="1" fill="#000"/></svg><span class="tx" style="left:19px;top:4px;transform:scaleX(0.9677);">IPSEC</span><span class="tx" style="left:210px;top:4px;transform:scaleX(0.9771);">Windows 2000 and later</span><span class="tx" style="left:361px;top:4px;transform:scaleX(1.0);">2.1</span><span class="tx" style="left:410px;top:4px;transform:scaleX(0.9946);">Not allowed</span></div>
</div>
<div class="abs sb" style="left:497px;top:2px;width:16px;height:313px"></div>
<div class="abs sbtn" style="left:497px;top:2px;width:16px;height:16px"><svg class="abs" style="left:4px;top:6px" width="7" height="4" viewBox="0 0 7 4" shape-rendering="crispEdges" ><rect x="3" y="0" width="1" height="1" fill="#000"/><rect x="2" y="1" width="3" height="1" fill="#000"/><rect x="1" y="2" width="5" height="1" fill="#000"/><rect x="0" y="3" width="7" height="1" fill="#000"/></svg></div>
<div class="abs sbtn" style="left:497px;top:18px;width:16px;height:159px"></div>
<div class="abs sbtn" style="left:497px;top:299px;width:16px;height:16px"><svg class="abs" style="left:4px;top:6px" width="7" height="4" viewBox="0 0 7 4" shape-rendering="crispEdges" ><rect x="0" y="0" width="7" height="1" fill="#000"/><rect x="1" y="1" width="5" height="1" fill="#000"/><rect x="2" y="2" width="3" height="1" fill="#000"/><rect x="3" y="3" width="1" height="1" fill="#000"/></svg></div>
<div class="abs sb" style="left:2px;top:315px;width:495px;height:16px"></div>
<div class="abs sbtn" style="left:2px;top:315px;width:16px;height:16px"><svg class="abs" style="left:6px;top:4px" width="4" height="7" viewBox="0 0 4 7" shape-rendering="crispEdges" ><rect x="3" y="0" width="1" height="1" fill="#000"/><rect x="2" y="1" width="2" height="1" fill="#000"/><rect x="1" y="2" width="3" height="1" fill="#000"/><rect x="0" y="3" width="4" height="1" fill="#000"/><rect x="1" y="4" width="3" height="1" fill="#000"/><rect x="2" y="5" width="2" height="1" fill="#000"/><rect x="3" y="6" width="1" height="1" fill="#000"/></svg></div>
<div class="abs sbtn" style="left:18px;top:315px;width:454px;height:16px"></div>
<div class="abs sbtn" style="left:481px;top:315px;width:16px;height:16px"><svg class="abs" style="left:6px;top:4px" width="4" height="7" viewBox="0 0 4 7" shape-rendering="crispEdges" ><rect x="0" y="0" width="1" height="1" fill="#000"/><rect x="0" y="1" width="2" height="1" fill="#000"/><rect x="0" y="2" width="3" height="1" fill="#000"/><rect x="0" y="3" width="4" height="1" fill="#000"/><rect x="0" y="4" width="3" height="1" fill="#000"/><rect x="0" y="5" width="2" height="1" fill="#000"/><rect x="0" y="6" width="1" height="1" fill="#000"/></svg></div>
<div class="abs" style="left:497px;top:315px;width:16px;height:16px;background:#d4d0c8"></div>
</div>
<div class="abs st" style="left:4px;top:410px;width:455px;height:18px"></div>
<div class="abs st" style="left:461px;top:410px;width:130px;height:18px"></div>
<div class="abs st" style="left:593px;top:410px;width:83px;height:18px"></div>
</div>
</body></html>
